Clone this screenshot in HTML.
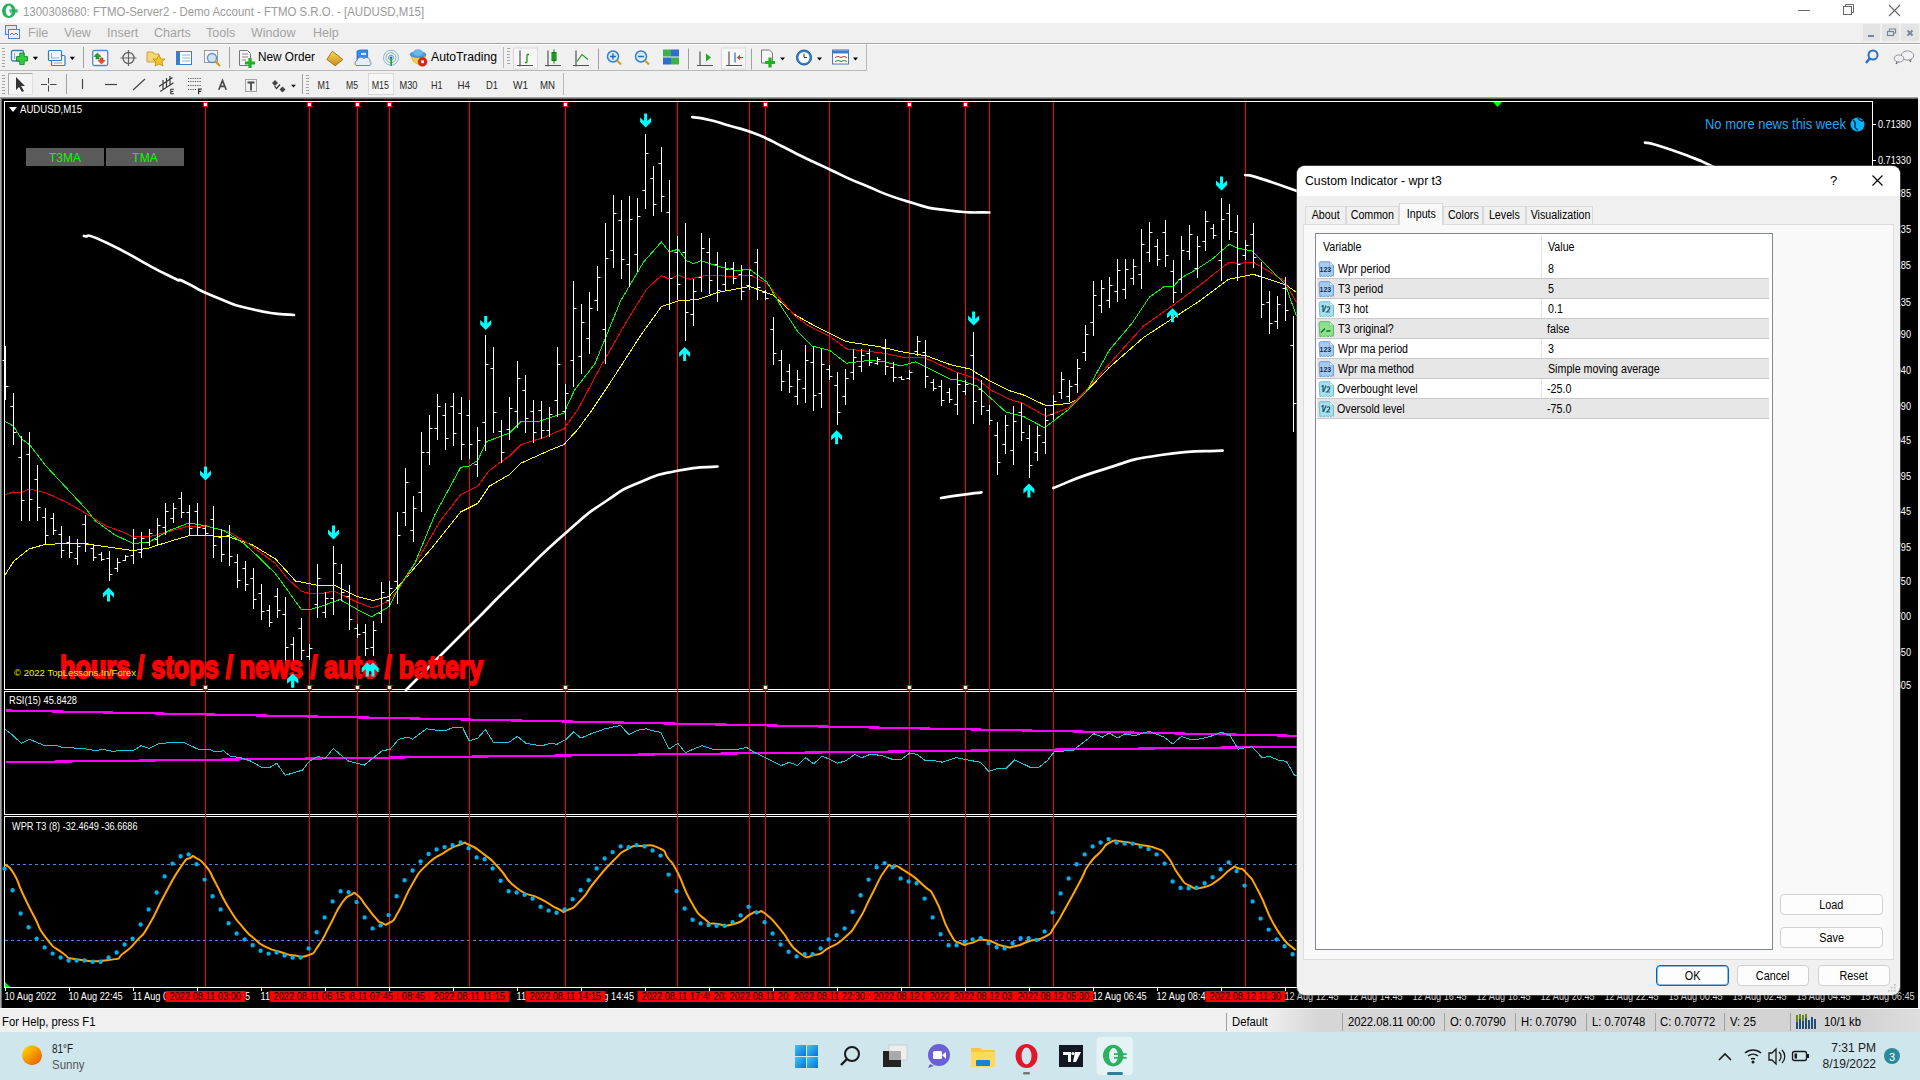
<!DOCTYPE html>
<html><head><meta charset="utf-8">
<style>
*{margin:0;padding:0;box-sizing:border-box}
html,body{width:1920px;height:1080px;overflow:hidden;background:#f0f0f0;font-family:"Liberation Sans",sans-serif;position:relative}
.a{position:absolute}
.t{position:absolute;white-space:nowrap;line-height:1}
.menuitem{top:27px;font-size:12.5px;color:#a3a3a3}
.tf{position:absolute;top:79px;font-size:11.5px;color:#222;white-space:nowrap;line-height:1}
.sb{position:absolute;top:1016px;font-size:12px;color:#000;white-space:nowrap;line-height:1;transform:scaleX(.94);transform-origin:0 0}
.sep{position:absolute;top:1013px;width:1px;height:18px;background:#a0a0a0}
.row{position:absolute;left:1317px;width:452px;height:20px}
.row.g{background:#e6e6e6}
.rl{position:absolute;left:0;top:19px;width:452px;height:1px;background:#c8c8c8}
.cell{position:absolute;font-size:12px;color:#000;top:4px;white-space:nowrap;line-height:1;transform:scaleX(.89);transform-origin:0 0}
.btn{position:absolute;background:#fdfdfd;border:1px solid #d0d0d0;border-radius:4px;font-size:12px;color:#000;text-align:center;line-height:20px}
.tab{position:absolute;top:206px;height:18px;border:1px solid #d9d9d9;border-bottom:none;background:#f0f0f0;font-size:12px;color:#000;text-align:center;line-height:17px;white-space:nowrap}.tab span{display:inline-block;transform:scaleX(.89)}
.ico{position:absolute;left:1px;top:2px;width:16px;height:16px;border-radius:2px}
</style></head><body>
<!-- title bar -->
<div class="a" style="left:0;top:0;width:1920px;height:23px;background:#fff"></div>
<svg class="a" style="left:0;top:0" width="22" height="22"><path fill-rule="evenodd" fill="#27b15e" d="M8.8,3.6a6.8,7.2 0 1,0 0.01,0zM8.9,5.6a3.1,5.2 0 1,1 -0.01,0z"/><rect x="9.5" y="9.2" width="8.3" height="3.4" fill="#27b15e" opacity=".85"/></svg>
<div class="t" style="left:23px;top:5px;font-size:13px;color:#9a9a9a;transform:scaleX(.88);transform-origin:0 0">1300308680: FTMO-Server2 - Demo Account - FTMO S.R.O. - [AUDUSD,M15]</div>
<svg class="a" style="left:1790px;top:0" width="130" height="22"><line x1="8" y1="10.5" x2="20" y2="10.5" stroke="#666" stroke-width="1"/><rect x="53.5" y="6.5" width="8" height="8" fill="none" stroke="#666"/><path d="M55.5,6.5v-2h8v8h-2" fill="none" stroke="#666"/><path d="M99,5l11,11M110,5l-11,11" stroke="#666" stroke-width="1.1"/></svg>
<!-- menu -->
<div class="a" style="left:0;top:23px;width:1920px;height:20px;background:#f0f0f0"></div>
<svg class="a" style="left:4px;top:24px" width="16" height="16"><rect x="1.5" y="1.5" width="11" height="9" fill="#dde9f7" stroke="#4b84c9"/><rect x="4.5" y="5.5" width="11" height="9" fill="#eaf2fb" stroke="#4b84c9"/><path d="M6,11l2,-2l2,2l2,-2l2,2" stroke="#4b84c9" fill="none"/></svg>
<div class="t menuitem" style="left:28px">File</div>
<div class="t menuitem" style="left:64px">View</div>
<div class="t menuitem" style="left:107px">Insert</div>
<div class="t menuitem" style="left:154px">Charts</div>
<div class="t menuitem" style="left:206px">Tools</div>
<div class="t menuitem" style="left:251px">Window</div>
<div class="t menuitem" style="left:313px">Help</div>
<svg class="a" style="left:1862px;top:23px" width="58" height="20"><rect x="1" y="1" width="17" height="17" fill="#e4e4e4"/><rect x="20" y="1" width="17" height="17" fill="#e4e4e4"/><rect x="39" y="1" width="18" height="17" fill="#e4e4e4"/><rect x="6" y="12" width="6" height="2" fill="#74869a"/><rect x="25.5" y="8.5" width="6" height="4" fill="none" stroke="#74869a" stroke-width="1.2"/><path d="M27.5,8.5v-2.5h6v4h-2" fill="none" stroke="#74869a" stroke-width="1.2"/><path d="M45.5,7.5l5,5M50.5,7.5l-5,5" stroke="#74869a" stroke-width="1.8"/></svg>
<div class="a" style="left:0;top:43px;width:1920px;height:1px;background:#a8a8a8"></div>
<div class="a" style="left:0;top:44px;width:1920px;height:1px;background:#fff"></div>
<!-- toolbar 1 -->
<div class="a" style="left:0;top:70px;width:867px;height:1px;background:#b9b9b9"></div>
<div class="a" style="left:866px;top:44px;width:1px;height:27px;background:#b9b9b9"></div>
<svg class="a" style="left:0;top:44px" width="880" height="27">
 <g fill="#a6a6a6"><rect x="2" y="4" width="3" height="1"/><rect x="2" y="7" width="3" height="1"/><rect x="2" y="10" width="3" height="1"/><rect x="2" y="13" width="3" height="1"/><rect x="2" y="16" width="3" height="1"/><rect x="2" y="19" width="3" height="1"/><rect x="2" y="22" width="3" height="1"/></g>
 <rect x="11.5" y="6.5" width="12" height="10.5" rx="1.5" fill="#f4f8fd" stroke="#3b78c4" stroke-width="1.3"/><path d="M14.5,9v6" stroke="#8aa0b8"/>
 <path d="M19.8,9h4.4v3.6h3.3v4.4h-3.3v3.6h-4.4v-3.6h-3.3v-4.4h3.3z" fill="#2ed040" stroke="#0f7a1c" stroke-width=".8"/>
 <path d="M32.8,12.8h5.3l-2.65,3.2z" fill="#000"/>
 <rect x="51.5" y="11.5" width="13.5" height="10" rx="1" fill="#f4f8fd" stroke="#3b78c4" stroke-width="1.2"/><rect x="48.5" y="6.5" width="13" height="10" rx="1" fill="#f4f8fd" stroke="#3b78c4" stroke-width="1.2"/><path d="M51,14h8M54,19h8M51.5,9v5" stroke="#8aa0b8" stroke-width=".9"/>
 <path d="M69.7,12.8h5.3l-2.65,3.2z" fill="#000"/>
 <rect x="83" y="3" width="1" height="21" fill="#a0a0a0"/>
 <rect x="92.7" y="6.5" width="15" height="15" rx="1.5" fill="#fff" stroke="#4a8ad4" stroke-width="1.3"/><path d="M95,11h11M95,14h11M95,17h11" stroke="#e6e6e6"/>
 <path d="M97.4,9L101,12.5H99V15H96V12.5H93.8z" fill="#1fa82a" stroke="#0d6a14" stroke-width=".5"/><path d="M101.5,20L105,16.5H103V14H100V16.5H98z" fill="#e8502a" stroke="#b02a10" stroke-width=".5"/>
 <rect x="229" y="3" width="1" height="21" fill="#a0a0a0"/>
 <g transform="translate(0,2)">
 <circle cx="128.5" cy="12" r="5.5" fill="none" stroke="#666" stroke-width="1.4"/><path d="M128.5,4v16M120.5,12h16" stroke="#666" stroke-width="1.2"/>
 <path d="M147,6h6l1,2h5v8h-12z" fill="#f5d77a" stroke="#c9a33a"/><path d="M159,9l2,4h4l-3,3l1,4l-4,-2l-4,2l1,-4l-3,-3h4z" fill="#f3c326" stroke="#c08a10" stroke-width=".8"/>
 <rect x="176.5" y="5.5" width="15" height="13" fill="#fff" stroke="#3d7cc9"/><rect x="177" y="6" width="3" height="12" fill="#3d7cc9"/><path d="M182,9h8M182,12h8M182,15h8" stroke="#8fb3e0"/>
 <rect x="204.5" y="4.5" width="13" height="12" fill="#f4f4f4" stroke="#999"/><circle cx="212" cy="12" r="4.5" fill="#cfe3f7" stroke="#5a8fc8" stroke-width="1.3"/><path d="M215,15l5,5" stroke="#c9a020" stroke-width="2.2"/>
 <path d="M239.5,4.5h8l3,3v12h-11z" fill="#f6f6f6" stroke="#777"/><path d="M242,8h6M242,11h6M242,14h4" stroke="#888"/><path d="M250,12v10M245,17h10" stroke="#1db31d" stroke-width="3.2"/>
 </g>
 <defs><linearGradient id="gold" x1="0" y1="0" x2="0" y2="1"><stop offset="0" stop-color="#f7dc5a"/><stop offset="1" stop-color="#c98a1a"/></linearGradient></defs>
 <path d="M332.3,7.2L342.9,15.5L335.2,21.8L326.9,15.5z" fill="url(#gold)" stroke="#a0661a" stroke-width=".9"/>
 <path d="M357,7l3,-1h7.6v10.6h-10.6z" fill="#2f8ff0" stroke="#1c64c0" stroke-width=".8"/><rect x="361" y="9" width="5" height="2" fill="#cfe6fb"/>
 <path d="M356,21.5a3,3 0 0,1 1,-5a4,4 0 0,1 7,-2a3.5,3.5 0 0,1 6,3a2.5,2.5 0 0,1 0,4z" fill="#e8eef6" stroke="#5a78a8" stroke-width=".9"/>
 <circle cx="391" cy="13.75" r="7.5" fill="none" stroke="#86b6e6" stroke-width="1"/><circle cx="391" cy="13.75" r="5" fill="none" stroke="#7fc08f" stroke-width="1"/><circle cx="391" cy="13.75" r="2.5" fill="none" stroke="#5a9ad8" stroke-width="1"/><circle cx="391" cy="13.75" r="1.3" fill="#2a5fc0"/><path d="M391.2,14v8" stroke="#22a030" stroke-width="1.6"/>
 <path d="M411,12L426,12L420,22L413,17z" fill="#f2d24a" stroke="#c9a020" stroke-width=".6"/><ellipse cx="418" cy="10.5" rx="8" ry="3" fill="#4aa0de" stroke="#2f78b8" stroke-width=".6"/><ellipse cx="418" cy="8.5" rx="4.5" ry="3.2" fill="#6cb8ea"/>
 <circle cx="422.6" cy="17.8" r="4.4" fill="#e0201a" stroke="#b01010" stroke-width=".5"/><rect x="421.2" y="16.4" width="2.8" height="2.8" fill="#fff"/>
 <rect x="503" y="3" width="1" height="21" fill="#b9b9b9"/>
 <g fill="#a6a6a6"><rect x="507" y="4" width="3" height="1"/><rect x="507" y="7" width="3" height="1"/><rect x="507" y="10" width="3" height="1"/><rect x="507" y="13" width="3" height="1"/><rect x="507" y="16" width="3" height="1"/><rect x="507" y="19" width="3" height="1"/></g>
 <g transform="translate(0,1.5)">
 <rect x="513.5" y="2.5" width="24" height="21" fill="#f7f7f7" stroke="#d8d8d8"/>
 <path d="M520,5v16M517,20h16" stroke="#555" stroke-width="1.2"/><path d="M527,9v8M525,17h2M527,9h2" stroke="#1a9a1a" stroke-width="1.3"/>
 <path d="M548,5v16M545,20h16" stroke="#555" stroke-width="1.2"/><rect x="552" y="7" width="4" height="8" fill="#2bbf2b" stroke="#117711"/><path d="M554,4v14" stroke="#117711"/>
 <path d="M576,5v16M573,20h16" stroke="#555" stroke-width="1.2"/><path d="M577,16l5,-7l6,5" stroke="#1a9a1a" fill="none" stroke-width="1.2"/>
 <rect x="598" y="3" width="1" height="21" fill="#a0a0a0"/>
 <circle cx="613" cy="11" r="5.5" fill="#d7ebfb" stroke="#3a7fc5" stroke-width="1.5"/><path d="M610,11h6M613,8v6" stroke="#2a6fb5" stroke-width="1.5"/><path d="M617,15l4,4" stroke="#c9a020" stroke-width="2.2"/>
 <circle cx="641" cy="11" r="5.5" fill="#d7ebfb" stroke="#3a7fc5" stroke-width="1.5"/><path d="M638,11h6" stroke="#2a6fb5" stroke-width="1.5"/><path d="M645,15l4,4" stroke="#c9a020" stroke-width="2.2"/>
 <rect x="663" y="4" width="8" height="7" fill="#3bb04b"/><rect x="671" y="4" width="8" height="7" fill="#2a6fd0"/><rect x="663" y="12" width="8" height="7" fill="#2a6fd0"/><rect x="671" y="12" width="8" height="7" fill="#3bb04b"/>
 <rect x="688" y="3" width="1" height="21" fill="#a0a0a0"/>
 <path d="M700,6v14M697,20h16" stroke="#555" stroke-width="1.2"/><path d="M706,8v8l5,-4z" fill="#22aa22"/>
 <rect x="721.5" y="2.5" width="24" height="21" fill="#f7f7f7" stroke="#d8d8d8"/>
 <path d="M729,6v14M726,20h16" stroke="#555" stroke-width="1.2"/><path d="M735,7v10" stroke="#2a6fb5" stroke-width="1.2"/><path d="M743,12h-5l2,-2M738,12l2,2" stroke="#d03a1a" stroke-width="1.2" fill="none"/>
 <rect x="751" y="3" width="1" height="21" fill="#a0a0a0"/>
 <path d="M761.5,4.5h8l3,3v10h-11z" fill="#f6f6f6" stroke="#777"/><path d="M770,12v10M765,17h10" stroke="#1db31d" stroke-width="3.2"/><path d="M780,12h5l-2.5,3z" fill="#000"/>
 <circle cx="804" cy="12" r="7.5" fill="#2f7fd0" stroke="#1a5aa8"/><circle cx="804" cy="12" r="5.5" fill="#fff"/><path d="M804,8v4h3" stroke="#333" fill="none"/><path d="M817,12h5l-2.5,3z" fill="#000"/>
 <rect x="832.5" y="4.5" width="16" height="14" fill="#fff" stroke="#3d7cc9"/><rect x="833" y="5" width="15" height="3" fill="#3d7cc9"/><path d="M835,12l3,-1l3,1l3,-1l3,1" stroke="#c03020" fill="none"/><path d="M835,16l3,-1l3,1l3,-1l3,1" stroke="#209020" fill="none"/><path d="M853,12h5l-2.5,3z" fill="#000"/>
 </g>
 <text x="258" y="17" font-size="13" font-family="Liberation Sans" fill="#000" textLength="57" lengthAdjust="spacingAndGlyphs">New Order</text>
 <text x="431" y="17" font-size="13" font-family="Liberation Sans" fill="#000" textLength="66" lengthAdjust="spacingAndGlyphs">AutoTrading</text>
</svg>
<svg class="a" style="left:1862px;top:46px" width="58" height="24"><circle cx="11" cy="9" r="4.5" fill="none" stroke="#2a6fd0" stroke-width="2"/><path d="M8,12l-4,5" stroke="#2a6fd0" stroke-width="2.5"/><ellipse cx="45.5" cy="9.5" rx="6.2" ry="4.6" fill="#f2f2f6" stroke="#8a8a8a" stroke-width=".9"/><path d="M47,13.5l1.5,2.5l0.5,-3" fill="#f2f2f6" stroke="#555" stroke-width=".8"/><ellipse cx="37" cy="12.5" rx="4.8" ry="3.6" fill="#f2f2f6" stroke="#8a8a8a" stroke-width=".9"/><path d="M35,15.5l-1,2.5l2.5,-2" fill="#f2f2f6" stroke="#555" stroke-width=".8"/></svg>
<!-- toolbar 2 -->
<div class="a" style="left:0;top:96px;width:1920px;height:1px;background:#f5f5f5"></div>
<svg class="a" style="left:0;top:71px" width="580" height="26">
 <g fill="#a6a6a6"><rect x="2" y="4" width="3" height="1"/><rect x="2" y="7" width="3" height="1"/><rect x="2" y="10" width="3" height="1"/><rect x="2" y="13" width="3" height="1"/><rect x="2" y="16" width="3" height="1"/><rect x="2" y="19" width="3" height="1"/><rect x="2" y="22" width="3" height="1"/></g>
 <rect x="8.5" y="2.5" width="24" height="21" fill="#f5f5f5" stroke="#e0e0e0"/><path d="M8.5,23.5v-21h24" stroke="#a8a8a8" fill="none"/>
 <path d="M16,6v13l3,-3l3,5l2,-1l-3,-5h4z" fill="#333"/>
 <path d="M48.5,7v5.5M48.5,14.5v6M41,13.5h6M50,13.5h6.5" stroke="#444" stroke-width="1"/>
 <rect x="66" y="3" width="1" height="20" fill="#a0a0a0"/>
 <path d="M82.5,8v10" stroke="#444" stroke-width="1.2"/>
 <path d="M105,13.5h12" stroke="#444" stroke-width="1.2"/>
 <path d="M133,19l12,-11" stroke="#444" stroke-width="1.2"/>
 <path d="M159,15.4l13.5,-9M160.2,20.4l13.3,-8.7M163,9v9M166.5,7v9M170,5v9" stroke="#3a3a3a" stroke-width="1.2" fill="none"/><path d="M170.3,18.2h3.6M170.3,20.5h3M170.3,22.8h3.6M170.8,18.2v4.6" stroke="#333" stroke-width="1.1"/>
 <path d="M188,7.5h13M188,10.5h13M188,14.5h13M188,18.5h9" stroke="#555" stroke-width="1.1" stroke-dasharray="1.2,1.1"/><path d="M198.6,23.2v-5h3.2M198.6,20.4h2.6" stroke="#333" stroke-width="1.2" fill="none"/>
 <path d="M218.8,18.8l3.7,-9.3l3.7,9.3M220.2,15.4h4.6" stroke="#4a4a4a" stroke-width="1.7" fill="none"/>
 <rect x="245.5" y="8.5" width="11" height="12" fill="none" stroke="#555" stroke-width="1" stroke-dasharray="1,1"/><path d="M247.5,11.5h7M251,11.5v8" stroke="#4a4a4a" stroke-width="1.8"/>
 <path d="M272,12l3,-3l3,3l-3,3z" fill="#444"/><path d="M274.5,15l2,2.5l3.5,-4" stroke="#333" stroke-width="1.2" fill="none"/><path d="M279.5,18.5l3,-3l3,3l-3,3z" fill="#444"/><path d="M291,13.8h5l-2.5,2.6z" fill="#000"/>
 <rect x="302" y="3" width="1" height="20" fill="#a0a0a0"/>
 <g fill="#a6a6a6"><rect x="306" y="4" width="3" height="1"/><rect x="306" y="7" width="3" height="1"/><rect x="306" y="10" width="3" height="1"/><rect x="306" y="13" width="3" height="1"/><rect x="306" y="16" width="3" height="1"/><rect x="306" y="19" width="3" height="1"/><rect x="306" y="22" width="3" height="1"/></g>
 <rect x="368.5" y="2.5" width="25" height="21" fill="#f7f7f7" stroke="#d8d8d8"/>
 <rect x="563" y="2" width="1" height="22" fill="#b9b9b9"/>
</svg>
<svg class="a" style="left:0;top:71px" width="580" height="26"><text x="317.5" y="18" font-size="11" fill="#2a2a2a" font-family="Liberation Sans" textLength="12.5" lengthAdjust="spacingAndGlyphs">M1</text><text x="346" y="18" font-size="11" fill="#2a2a2a" font-family="Liberation Sans" textLength="12.0" lengthAdjust="spacingAndGlyphs">M5</text><text x="371.7" y="18" font-size="11" fill="#2a2a2a" font-family="Liberation Sans" textLength="17.3" lengthAdjust="spacingAndGlyphs">M15</text><text x="399.5" y="18" font-size="11" fill="#2a2a2a" font-family="Liberation Sans" textLength="18.0" lengthAdjust="spacingAndGlyphs">M30</text><text x="431" y="18" font-size="11" fill="#2a2a2a" font-family="Liberation Sans" textLength="11.5" lengthAdjust="spacingAndGlyphs">H1</text><text x="457.5" y="18" font-size="11" fill="#2a2a2a" font-family="Liberation Sans" textLength="12.5" lengthAdjust="spacingAndGlyphs">H4</text><text x="486" y="18" font-size="11" fill="#2a2a2a" font-family="Liberation Sans" textLength="12.0" lengthAdjust="spacingAndGlyphs">D1</text><text x="513" y="18" font-size="11" fill="#2a2a2a" font-family="Liberation Sans" textLength="15.0" lengthAdjust="spacingAndGlyphs">W1</text><text x="540" y="18" font-size="11" fill="#2a2a2a" font-family="Liberation Sans" textLength="15.0" lengthAdjust="spacingAndGlyphs">MN</text></svg>
<svg class="a" style="left:0;top:0" width="1920" height="1080"><rect x="0" y="97" width="1920" height="911" fill="#000"/><rect x="0" y="97" width="1" height="911" fill="#a9a9a9"/><rect x="1" y="97" width="1" height="911" fill="#6a6a6a"/><rect x="1918" y="97" width="2" height="911" fill="#f3f3f3"/><rect x="0" y="97" width="1918" height="1" fill="#a0a0a0"/><rect x="1" y="98" width="1917" height="1" fill="#6a6a6a"/><rect x="0" y="1008" width="1920" height="1" fill="#fff"/><rect x="4.5" y="101.5" width="1868" height="588" fill="none" stroke="#fff" stroke-width="1"/><rect x="4.5" y="691.5" width="1868" height="123" fill="none" stroke="#fff" stroke-width="1"/><rect x="4.5" y="816.5" width="1868" height="171" fill="none" stroke="#fff" stroke-width="1"/><line x1="5.5" y1="987" x2="5.5" y2="991" stroke="#fff" stroke-width="1"/><line x1="69.5" y1="987" x2="69.5" y2="991" stroke="#fff" stroke-width="1"/><line x1="133.5" y1="987" x2="133.5" y2="991" stroke="#fff" stroke-width="1"/><line x1="197.5" y1="987" x2="197.5" y2="991" stroke="#fff" stroke-width="1"/><line x1="261.5" y1="987" x2="261.5" y2="991" stroke="#fff" stroke-width="1"/><line x1="325.5" y1="987" x2="325.5" y2="991" stroke="#fff" stroke-width="1"/><line x1="389.5" y1="987" x2="389.5" y2="991" stroke="#fff" stroke-width="1"/><line x1="453.5" y1="987" x2="453.5" y2="991" stroke="#fff" stroke-width="1"/><line x1="517.5" y1="987" x2="517.5" y2="991" stroke="#fff" stroke-width="1"/><line x1="581.5" y1="987" x2="581.5" y2="991" stroke="#fff" stroke-width="1"/><line x1="645.5" y1="987" x2="645.5" y2="991" stroke="#fff" stroke-width="1"/><line x1="709.5" y1="987" x2="709.5" y2="991" stroke="#fff" stroke-width="1"/><line x1="773.5" y1="987" x2="773.5" y2="991" stroke="#fff" stroke-width="1"/><line x1="837.5" y1="987" x2="837.5" y2="991" stroke="#fff" stroke-width="1"/><line x1="901.5" y1="987" x2="901.5" y2="991" stroke="#fff" stroke-width="1"/><line x1="965.5" y1="987" x2="965.5" y2="991" stroke="#fff" stroke-width="1"/><line x1="1029.5" y1="987" x2="1029.5" y2="991" stroke="#fff" stroke-width="1"/><line x1="1093.5" y1="987" x2="1093.5" y2="991" stroke="#fff" stroke-width="1"/><line x1="1157.5" y1="987" x2="1157.5" y2="991" stroke="#fff" stroke-width="1"/><line x1="1221.5" y1="987" x2="1221.5" y2="991" stroke="#fff" stroke-width="1"/><line x1="1285.5" y1="987" x2="1285.5" y2="991" stroke="#fff" stroke-width="1"/><line x1="1349.5" y1="987" x2="1349.5" y2="991" stroke="#fff" stroke-width="1"/><line x1="1413.5" y1="987" x2="1413.5" y2="991" stroke="#fff" stroke-width="1"/><line x1="1477.5" y1="987" x2="1477.5" y2="991" stroke="#fff" stroke-width="1"/><line x1="1541.5" y1="987" x2="1541.5" y2="991" stroke="#fff" stroke-width="1"/><line x1="1605.5" y1="987" x2="1605.5" y2="991" stroke="#fff" stroke-width="1"/><line x1="1669.5" y1="987" x2="1669.5" y2="991" stroke="#fff" stroke-width="1"/><line x1="1733.5" y1="987" x2="1733.5" y2="991" stroke="#fff" stroke-width="1"/><line x1="1797.5" y1="987" x2="1797.5" y2="991" stroke="#fff" stroke-width="1"/><line x1="1861.5" y1="987" x2="1861.5" y2="991" stroke="#fff" stroke-width="1"/><line x1="1872" y1="124.5" x2="1876" y2="124.5" stroke="#fff"/><text x="1878" y="127.5" fill="#fff" font-size="10" font-family="Liberation Sans" textLength="33" lengthAdjust="spacingAndGlyphs">0.71380</text><line x1="1872" y1="160.5" x2="1876" y2="160.5" stroke="#fff"/><text x="1878" y="163.5" fill="#fff" font-size="10" font-family="Liberation Sans" textLength="33" lengthAdjust="spacingAndGlyphs">0.71330</text><line x1="1872" y1="193.5" x2="1876" y2="193.5" stroke="#fff"/><text x="1878" y="196.5" fill="#fff" font-size="10" font-family="Liberation Sans" textLength="33" lengthAdjust="spacingAndGlyphs">0.71285</text><line x1="1872" y1="229.5" x2="1876" y2="229.5" stroke="#fff"/><text x="1878" y="232.5" fill="#fff" font-size="10" font-family="Liberation Sans" textLength="33" lengthAdjust="spacingAndGlyphs">0.71235</text><line x1="1872" y1="265.5" x2="1876" y2="265.5" stroke="#fff"/><text x="1878" y="268.5" fill="#fff" font-size="10" font-family="Liberation Sans" textLength="33" lengthAdjust="spacingAndGlyphs">0.71185</text><line x1="1872" y1="302.5" x2="1876" y2="302.5" stroke="#fff"/><text x="1878" y="305.5" fill="#fff" font-size="10" font-family="Liberation Sans" textLength="33" lengthAdjust="spacingAndGlyphs">0.71135</text><line x1="1872" y1="334.5" x2="1876" y2="334.5" stroke="#fff"/><text x="1878" y="337.5" fill="#fff" font-size="10" font-family="Liberation Sans" textLength="33" lengthAdjust="spacingAndGlyphs">0.71090</text><line x1="1872" y1="370.5" x2="1876" y2="370.5" stroke="#fff"/><text x="1878" y="373.5" fill="#fff" font-size="10" font-family="Liberation Sans" textLength="33" lengthAdjust="spacingAndGlyphs">0.71040</text><line x1="1872" y1="406.5" x2="1876" y2="406.5" stroke="#fff"/><text x="1878" y="409.5" fill="#fff" font-size="10" font-family="Liberation Sans" textLength="33" lengthAdjust="spacingAndGlyphs">0.70990</text><line x1="1872" y1="440.5" x2="1876" y2="440.5" stroke="#fff"/><text x="1878" y="443.5" fill="#fff" font-size="10" font-family="Liberation Sans" textLength="33" lengthAdjust="spacingAndGlyphs">0.70945</text><line x1="1872" y1="476.5" x2="1876" y2="476.5" stroke="#fff"/><text x="1878" y="479.5" fill="#fff" font-size="10" font-family="Liberation Sans" textLength="33" lengthAdjust="spacingAndGlyphs">0.70895</text><line x1="1872" y1="511.5" x2="1876" y2="511.5" stroke="#fff"/><text x="1878" y="514.5" fill="#fff" font-size="10" font-family="Liberation Sans" textLength="33" lengthAdjust="spacingAndGlyphs">0.70845</text><line x1="1872" y1="547.5" x2="1876" y2="547.5" stroke="#fff"/><text x="1878" y="550.5" fill="#fff" font-size="10" font-family="Liberation Sans" textLength="33" lengthAdjust="spacingAndGlyphs">0.70795</text><line x1="1872" y1="581.5" x2="1876" y2="581.5" stroke="#fff"/><text x="1878" y="584.5" fill="#fff" font-size="10" font-family="Liberation Sans" textLength="33" lengthAdjust="spacingAndGlyphs">0.70750</text><line x1="1872" y1="616.5" x2="1876" y2="616.5" stroke="#fff"/><text x="1878" y="619.5" fill="#fff" font-size="10" font-family="Liberation Sans" textLength="33" lengthAdjust="spacingAndGlyphs">0.70700</text><line x1="1872" y1="652.5" x2="1876" y2="652.5" stroke="#fff"/><text x="1878" y="655.5" fill="#fff" font-size="10" font-family="Liberation Sans" textLength="33" lengthAdjust="spacingAndGlyphs">0.70650</text><line x1="1872" y1="685.5" x2="1876" y2="685.5" stroke="#fff"/><text x="1878" y="688.5" fill="#fff" font-size="10" font-family="Liberation Sans" textLength="33" lengthAdjust="spacingAndGlyphs">0.70605</text><line x1="5" y1="864.5" x2="1872" y2="864.5" stroke="#3d8fd0" stroke-width="1" stroke-dasharray="3,3"/><line x1="5" y1="940.5" x2="1872" y2="940.5" stroke="#3d8fd0" stroke-width="1" stroke-dasharray="3,3"/><line x1="205.5" y1="102" x2="205.5" y2="987" stroke="#ff0000" stroke-width="1"/><line x1="309.5" y1="102" x2="309.5" y2="987" stroke="#ff0000" stroke-width="1"/><line x1="357.5" y1="102" x2="357.5" y2="987" stroke="#ff0000" stroke-width="1"/><line x1="389.5" y1="102" x2="389.5" y2="987" stroke="#ff0000" stroke-width="1"/><line x1="469.5" y1="102" x2="469.5" y2="987" stroke="#ff0000" stroke-width="1"/><line x1="565.5" y1="102" x2="565.5" y2="987" stroke="#ff0000" stroke-width="1"/><line x1="677.5" y1="102" x2="677.5" y2="987" stroke="#ff0000" stroke-width="1"/><line x1="749.5" y1="102" x2="749.5" y2="987" stroke="#ff0000" stroke-width="1"/><line x1="765.5" y1="102" x2="765.5" y2="987" stroke="#ff0000" stroke-width="1"/><line x1="829.5" y1="102" x2="829.5" y2="987" stroke="#ff0000" stroke-width="1"/><line x1="909.5" y1="102" x2="909.5" y2="987" stroke="#ff0000" stroke-width="1"/><line x1="965.5" y1="102" x2="965.5" y2="987" stroke="#ff0000" stroke-width="1"/><line x1="989.5" y1="102" x2="989.5" y2="987" stroke="#ff0000" stroke-width="1"/><line x1="1053.5" y1="102" x2="1053.5" y2="987" stroke="#ff0000" stroke-width="1"/><line x1="1245.5" y1="102" x2="1245.5" y2="987" stroke="#ff0000" stroke-width="1"/><polyline points="5.0,575.0 14.0,561.0 29.0,549.0 43.0,545.0 60.0,543.6 86.0,544.0 115.0,548.0 133.4,550.7 149.0,548.0 172.0,540.7 189.0,535.8 206.6,535.5 229.5,537.0 252.5,545.0 275.5,559.0 295.5,581.0 310.0,583.7 320.0,586.0 334.3,585.2 357.3,596.6 373.0,600.4 388.9,596.6 403.2,580.9 431.9,547.9 460.6,512.0 477.8,503.4 489.3,486.2 509.4,474.7 520.9,463.2 549.5,450.3 563.9,444.6 578.3,428.8 592.0,410.0 614.9,375.5 640.7,335.3 661.4,306.6 678.0,300.9 698.0,299.4 718.2,292.3 749.7,286.5 772.7,295.0 795.6,315.2 815.0,326.0 846.6,341.7 884.0,347.4 901.0,351.7 927.0,356.0 950.0,364.6 970.0,369.0 988.7,380.4 1008.8,390.5 1023.1,394.8 1046.1,405.7 1069.0,403.4 1080.5,397.6 1109.2,367.5 1143.6,337.4 1172.3,318.7 1201.0,300.0 1228.3,279.3 1253.3,274.3 1286.1,285.0 1296.0,292.0" fill="none" stroke="#ffff00" stroke-width="1" shape-rendering="crispEdges"/><polyline points="5.0,494.8 13.5,492.0 21.5,492.5 29.5,489.0 46.0,493.0 66.0,502.0 86.0,513.4 106.0,526.0 123.0,532.0 133.4,537.0 152.0,536.0 172.0,530.6 189.0,526.0 206.6,526.0 229.5,532.0 252.5,546.4 275.5,563.6 287.0,578.0 301.0,591.0 310.0,593.8 320.0,593.8 334.3,591.0 357.3,602.4 373.0,608.0 388.9,601.0 400.3,586.6 420.4,555.0 440.5,520.6 460.6,494.8 477.8,486.2 489.3,470.4 509.4,456.0 520.9,444.6 543.8,437.4 563.9,428.8 577.6,410.0 600.5,366.9 623.5,326.7 646.4,289.4 661.4,275.6 669.4,279.3 678.0,275.0 689.5,279.3 706.7,275.0 732.5,276.5 749.7,275.0 767.0,283.6 795.6,316.6 810.0,326.7 829.4,336.0 846.6,348.9 884.0,353.2 904.0,357.5 924.0,357.5 955.6,371.8 977.2,379.0 991.6,390.5 1008.8,399.0 1023.1,403.4 1046.1,416.3 1069.0,407.7 1083.4,393.3 1115.0,357.5 1143.6,326.0 1172.3,305.8 1198.8,286.1 1221.5,268.0 1229.4,262.3 1237.4,263.4 1253.3,262.3 1266.9,270.2 1283.9,280.4 1296.3,302.0" fill="none" stroke="#ff0000" stroke-width="1" shape-rendering="crispEdges"/><polyline points="5.0,421.6 13.5,426.0 21.5,439.0 29.5,444.6 46.0,466.0 66.0,487.6 86.0,509.0 95.0,520.6 115.0,535.0 133.4,543.6 149.0,542.0 169.0,530.6 189.0,523.0 206.6,526.0 224.0,530.6 244.0,543.6 258.0,556.5 275.5,573.7 287.0,589.5 301.0,609.0 310.0,609.5 320.0,606.7 340.0,599.5 357.3,609.5 371.6,616.7 388.9,606.7 400.3,585.2 414.7,563.6 434.8,514.9 460.6,467.5 469.2,466.0 477.8,460.3 486.4,441.7 509.4,433.0 520.9,421.6 538.1,421.6 563.9,413.0 566.0,408.5 574.7,389.8 594.8,364.0 620.6,300.9 643.6,262.0 661.4,242.0 669.4,252.0 678.0,249.2 686.6,260.7 693.8,263.6 701.0,260.7 718.2,266.4 735.4,270.7 749.7,269.3 767.0,282.2 781.3,306.6 797.8,331.6 812.0,346.0 829.4,350.3 846.6,363.2 869.6,360.3 884.0,361.8 901.0,366.0 915.5,361.8 950.0,379.0 960.0,380.4 977.2,386.2 991.6,399.0 1005.9,412.0 1023.1,416.3 1044.6,427.8 1069.0,409.1 1086.3,391.9 1109.2,350.3 1132.2,323.0 1149.4,297.2 1164.8,286.1 1173.8,286.1 1180.7,278.2 1198.8,268.0 1212.4,258.9 1229.4,244.1 1237.4,248.0 1252.1,251.0 1264.6,263.4 1285.0,283.8 1296.3,315.6" fill="none" stroke="#00ff00" stroke-width="1" shape-rendering="crispEdges"/><path d="M5.5,346V400M2.5,360.5H5.5M5.5,386.5H8.5M13.5,393V445M10.5,406.5H13.5M13.5,432.5H16.5M21.5,436V521M18.5,457.5H21.5M21.5,500.5H24.5M29.5,432V521M26.5,454.5H29.5M29.5,499.5H32.5M37.5,465V521M34.5,479.5H37.5M37.5,507.5H40.5M45.5,508V544M42.5,517.5H45.5M45.5,535.5H48.5M53.5,513V535M50.5,518.5H53.5M53.5,530.5H56.5M61.5,526V558M58.5,534.5H61.5M61.5,550.5H64.5M69.5,536V558M66.5,542.5H69.5M69.5,552.5H72.5M77.5,539V565M74.5,558.5H77.5M77.5,546.5H80.5M85.5,515V552M82.5,524.5H85.5M85.5,543.5H88.5M93.5,544V561M90.5,548.5H93.5M93.5,557.5H96.5M101.5,552V561M98.5,554.5H101.5M101.5,559.5H104.5M109.5,551V581M106.5,558.5H109.5M109.5,574.5H112.5M117.5,558V572M114.5,568.5H117.5M117.5,562.5H120.5M125.5,555V561M122.5,560.5H125.5M125.5,556.5H128.5M133.5,529V564M130.5,555.5H133.5M133.5,538.5H136.5M141.5,532V558M138.5,552.5H141.5M141.5,538.5H144.5M149.5,529V546M146.5,542.5H149.5M149.5,533.5H152.5M157.5,518V546M154.5,539.5H157.5M157.5,525.5H160.5M165.5,503V535M162.5,527.5H165.5M165.5,511.5H168.5M173.5,503V523M170.5,518.5H173.5M173.5,508.5H176.5M181.5,492V518M178.5,498.5H181.5M181.5,512.5H184.5M189.5,505V535M186.5,512.5H189.5M189.5,528.5H192.5M197.5,503V535M194.5,511.5H197.5M197.5,527.5H200.5M205.5,526V535M202.5,528.5H205.5M205.5,533.5H208.5M213.5,506V558M210.5,519.5H213.5M213.5,545.5H216.5M221.5,529V562M218.5,537.5H221.5M221.5,554.5H224.5M229.5,525V566M226.5,535.5H229.5M229.5,556.5H232.5M237.5,554V588M234.5,562.5H237.5M237.5,580.5H240.5M245.5,561V591M242.5,568.5H245.5M245.5,584.5H248.5M253.5,568V609M250.5,578.5H253.5M253.5,599.5H256.5M261.5,584V620M258.5,593.5H261.5M261.5,611.5H264.5M269.5,605V627M266.5,610.5H269.5M269.5,622.5H272.5M277.5,588V618M274.5,596.5H277.5M277.5,610.5H280.5M285.5,597V664M282.5,614.5H285.5M285.5,647.5H288.5M293.5,637V667M290.5,644.5H293.5M293.5,660.5H296.5M301.5,618V660M298.5,628.5H301.5M301.5,650.5H304.5M309.5,644V660M306.5,656.5H309.5M309.5,648.5H312.5M317.5,564V618M314.5,604.5H317.5M317.5,578.5H320.5M325.5,592V618M322.5,612.5H325.5M325.5,598.5H328.5M333.5,546V615M330.5,598.5H333.5M333.5,563.5H336.5M341.5,564V601M338.5,573.5H341.5M341.5,592.5H344.5M349.5,585V630M346.5,596.5H349.5M349.5,619.5H352.5M357.5,624V638M354.5,628.5H357.5M357.5,634.5H360.5M365.5,624V656M362.5,632.5H365.5M365.5,648.5H368.5M373.5,621V656M370.5,647.5H373.5M373.5,630.5H376.5M381.5,582V623M378.5,613.5H381.5M381.5,592.5H384.5M389.5,581V607M386.5,600.5H389.5M389.5,588.5H392.5M397.5,512V604M394.5,581.5H397.5M397.5,535.5H400.5M405.5,468V526M402.5,512.5H405.5M405.5,482.5H408.5M413.5,496V542M410.5,530.5H413.5M413.5,508.5H416.5M421.5,432V512M418.5,492.5H421.5M421.5,452.5H424.5M429.5,415V465M426.5,452.5H429.5M429.5,428.5H432.5M437.5,394V440M434.5,428.5H437.5M437.5,406.5H440.5M445.5,403V450M442.5,415.5H445.5M445.5,438.5H448.5M453.5,393V446M450.5,406.5H453.5M453.5,433.5H456.5M461.5,397V460M458.5,413.5H461.5M461.5,444.5H464.5M469.5,400V459M466.5,415.5H469.5M469.5,444.5H472.5M477.5,427V477M474.5,464.5H477.5M477.5,440.5H480.5M485.5,335V451M482.5,422.5H485.5M485.5,364.5H488.5M493.5,347V433M490.5,368.5H493.5M493.5,412.5H496.5M501.5,420V463M498.5,431.5H501.5M501.5,452.5H504.5M509.5,397V440M506.5,429.5H509.5M509.5,408.5H512.5M517.5,361V428M514.5,411.5H517.5M517.5,378.5H520.5M525.5,375V433M522.5,390.5H525.5M525.5,418.5H528.5M533.5,400V443M530.5,411.5H533.5M533.5,432.5H536.5M541.5,401V439M538.5,410.5H541.5M541.5,430.5H544.5M549.5,407V437M546.5,430.5H549.5M549.5,414.5H552.5M557.5,347V417M554.5,400.5H557.5M557.5,364.5H560.5M565.5,384V420M562.5,411.5H565.5M565.5,393.5H568.5M573.5,281V387M570.5,360.5H573.5M573.5,308.5H576.5M581.5,304V374M578.5,356.5H581.5M581.5,322.5H584.5M589.5,292V354M586.5,338.5H589.5M589.5,308.5H592.5M597.5,266V311M594.5,300.5H597.5M597.5,277.5H600.5M605.5,223V364M602.5,329.5H605.5M605.5,258.5H608.5M613.5,195V268M610.5,250.5H613.5M613.5,213.5H616.5M621.5,200V279M618.5,220.5H621.5M621.5,259.5H624.5M629.5,196V287M626.5,264.5H629.5M629.5,219.5H632.5M637.5,198V272M634.5,254.5H637.5M637.5,216.5H640.5M645.5,134V209M642.5,190.5H645.5M645.5,153.5H648.5M653.5,166V216M650.5,178.5H653.5M653.5,204.5H656.5M661.5,147V212M658.5,163.5H661.5M661.5,196.5H664.5M669.5,180V310M666.5,212.5H669.5M669.5,278.5H672.5M677.5,236V300M674.5,252.5H677.5M677.5,284.5H680.5M685.5,223V341M682.5,252.5H685.5M685.5,312.5H688.5M693.5,279V326M690.5,314.5H693.5M693.5,291.5H696.5M701.5,233V292M698.5,277.5H701.5M701.5,248.5H704.5M709.5,238V294M706.5,252.5H709.5M709.5,280.5H712.5M717.5,252V302M714.5,264.5H717.5M717.5,290.5H720.5M725.5,262V291M722.5,284.5H725.5M725.5,269.5H728.5M733.5,262V284M730.5,268.5H733.5M733.5,278.5H736.5M741.5,265V300M738.5,274.5H741.5M741.5,291.5H744.5M749.5,270V290M746.5,285.5H749.5M749.5,275.5H752.5M757.5,249V300M754.5,262.5H757.5M757.5,287.5H760.5M765.5,290V300M762.5,292.5H765.5M765.5,298.5H768.5M773.5,317V365M770.5,329.5H773.5M773.5,353.5H776.5M781.5,350V391M778.5,360.5H781.5M781.5,381.5H784.5M789.5,364V393M786.5,371.5H789.5M789.5,386.5H792.5M797.5,370V405M794.5,396.5H797.5M797.5,379.5H800.5M805.5,345V403M802.5,388.5H805.5M805.5,360.5H808.5M813.5,346V411M810.5,362.5H813.5M813.5,395.5H816.5M821.5,349V408M818.5,393.5H821.5M821.5,364.5H824.5M829.5,365V380M826.5,369.5H829.5M829.5,376.5H832.5M837.5,372V425M834.5,385.5H837.5M837.5,412.5H840.5M845.5,369V405M842.5,396.5H845.5M845.5,378.5H848.5M853.5,349V380M850.5,372.5H853.5M853.5,357.5H856.5M861.5,349V372M858.5,366.5H861.5M861.5,355.5H864.5M869.5,349V366M866.5,353.5H869.5M869.5,362.5H872.5M877.5,357V365M874.5,363.5H877.5M877.5,359.5H880.5M885.5,339V375M882.5,348.5H885.5M885.5,366.5H888.5M893.5,362V382M890.5,367.5H893.5M893.5,377.5H896.5M901.5,376V380M898.5,377.5H901.5M901.5,379.5H904.5M909.5,370V380M906.5,378.5H909.5M909.5,372.5H912.5M917.5,336V356M914.5,351.5H917.5M917.5,341.5H920.5M925.5,340V388M922.5,352.5H925.5M925.5,376.5H928.5M933.5,379V391M930.5,382.5H933.5M933.5,388.5H936.5M941.5,380V406M938.5,386.5H941.5M941.5,400.5H944.5M949.5,388V403M946.5,392.5H949.5M949.5,399.5H952.5M957.5,373V415M954.5,404.5H957.5M957.5,384.5H960.5M965.5,380V395M962.5,391.5H965.5M965.5,384.5H968.5M973.5,332V424M970.5,355.5H973.5M973.5,401.5H976.5M981.5,380V415M978.5,389.5H981.5M981.5,406.5H984.5M989.5,405V425M986.5,410.5H989.5M989.5,420.5H992.5M997.5,422V475M994.5,435.5H997.5M997.5,462.5H1000.5M1005.5,415V454M1002.5,444.5H1005.5M1005.5,425.5H1008.5M1013.5,406V465M1010.5,450.5H1013.5M1013.5,421.5H1016.5M1021.5,403V441M1018.5,412.5H1021.5M1021.5,432.5H1024.5M1029.5,425V478M1026.5,438.5H1029.5M1029.5,465.5H1032.5M1037.5,426V461M1034.5,452.5H1037.5M1037.5,435.5H1040.5M1045.5,408V454M1042.5,442.5H1045.5M1045.5,420.5H1048.5M1053.5,395V420M1050.5,414.5H1053.5M1053.5,401.5H1056.5M1061.5,372V399M1058.5,392.5H1061.5M1061.5,379.5H1064.5M1069.5,380V402M1066.5,396.5H1069.5M1069.5,386.5H1072.5M1077.5,359V393M1074.5,384.5H1077.5M1077.5,368.5H1080.5M1085.5,325V361M1082.5,352.5H1085.5M1085.5,334.5H1088.5M1093.5,281V336M1090.5,322.5H1093.5M1093.5,295.5H1096.5M1101.5,280V313M1098.5,305.5H1101.5M1101.5,288.5H1104.5M1109.5,277V308M1106.5,300.5H1109.5M1109.5,285.5H1112.5M1117.5,259V302M1114.5,291.5H1117.5M1117.5,270.5H1120.5M1125.5,259V299M1122.5,289.5H1125.5M1125.5,269.5H1128.5M1133.5,259V285M1130.5,278.5H1133.5M1133.5,266.5H1136.5M1141.5,229V289M1138.5,274.5H1141.5M1141.5,244.5H1144.5M1149.5,222V262M1146.5,252.5H1149.5M1149.5,232.5H1152.5M1157.5,239V266M1154.5,246.5H1157.5M1157.5,259.5H1160.5M1165.5,220V267M1162.5,232.5H1165.5M1165.5,255.5H1168.5M1173.5,260V303M1170.5,271.5H1173.5M1173.5,292.5H1176.5M1181.5,236V293M1178.5,279.5H1181.5M1181.5,250.5H1184.5M1189.5,225V260M1186.5,251.5H1189.5M1189.5,234.5H1192.5M1197.5,236V278M1194.5,268.5H1197.5M1197.5,246.5H1200.5M1205.5,211V251M1202.5,241.5H1205.5M1205.5,221.5H1208.5M1213.5,224V239M1210.5,228.5H1213.5M1213.5,235.5H1216.5M1221.5,198V281M1218.5,260.5H1221.5M1221.5,219.5H1224.5M1229.5,204V240M1226.5,213.5H1229.5M1229.5,231.5H1232.5M1237.5,215V281M1234.5,232.5H1237.5M1237.5,264.5H1240.5M1245.5,240V260M1242.5,255.5H1245.5M1245.5,245.5H1248.5M1253.5,223V268M1250.5,234.5H1253.5M1253.5,257.5H1256.5M1261.5,262V318M1258.5,276.5H1261.5M1261.5,304.5H1264.5M1269.5,291V334M1266.5,302.5H1269.5M1269.5,323.5H1272.5M1277.5,296V329M1274.5,321.5H1277.5M1277.5,304.5H1280.5M1285.5,277V321M1282.5,288.5H1285.5M1285.5,310.5H1288.5M1293.5,316V432M1290.5,345.5H1293.5M1293.5,403.5H1296.5" stroke="#fff" stroke-width="1" fill="none"/><path d="M84.0,236.0C91.5,238.3 79.6,230.2 106.6,242.8C133.6,255.4 138.7,260.6 165.0,273.8C191.3,287.0 169.6,275.0 185.6,282.4C201.6,289.8 190.1,286.9 213.0,296.0C235.9,305.1 227.4,303.5 254.4,309.8C281.4,316.1 280.8,313.3 294.0,315.0" fill="none" stroke="#fff" stroke-width="2.7" stroke-linecap="round" stroke-linejoin="round"/><path d="M406.0,690.0C427.1,668.9 432.8,663.2 469.2,626.8C505.6,590.4 482.6,612.5 515.1,580.9C547.6,549.3 536.2,558.8 566.8,532.0C597.4,505.2 582.6,517.1 607.0,500.5C631.4,483.9 616.6,492.2 640.0,482.3C663.4,472.4 651.5,476.1 677.3,470.8C703.1,465.5 704.1,467.9 717.5,466.5" fill="none" stroke="#fff" stroke-width="2.7" stroke-linecap="round" stroke-linejoin="round"/><path d="M692.3,117.2C698.1,118.1 697.2,117.1 709.6,120.0C722.0,122.9 716.2,121.9 729.6,125.8C743.0,129.7 737.2,127.3 749.7,131.6C762.2,135.9 755.6,133.5 767.0,138.7C778.4,143.9 769.7,140.1 784.0,147.3C798.3,154.5 795.1,153.1 810.0,160.3C824.9,167.5 811.0,160.8 828.7,168.9C846.4,177.0 836.3,173.6 863.1,184.6C889.9,195.6 880.3,193.3 909.0,201.9C937.7,210.5 922.4,207.0 949.2,210.5C976.0,214.0 976.0,211.8 989.4,212.5" fill="none" stroke="#fff" stroke-width="2.7" stroke-linecap="round" stroke-linejoin="round"/><path d="M941.0,498.0C947.3,497.1 946.5,497.1 960.0,495.2C973.5,493.3 974.3,493.3 981.5,492.3" fill="none" stroke="#fff" stroke-width="2.7" stroke-linecap="round" stroke-linejoin="round"/><path d="M1053.3,488.0C1070.0,481.8 1067.6,480.4 1103.5,469.4C1139.4,458.4 1121.2,461.2 1160.9,455.0C1200.6,448.8 1202.0,452.1 1222.6,450.7" fill="none" stroke="#fff" stroke-width="2.7" stroke-linecap="round" stroke-linejoin="round"/><path d="M1245.3,175.0C1250.2,176.1 1243.0,173.1 1260.0,178.4C1277.0,183.7 1276.3,183.6 1296.3,190.8C1316.3,198.0 1312.1,196.9 1320.0,200.0" fill="none" stroke="#fff" stroke-width="2.7" stroke-linecap="round" stroke-linejoin="round"/><path d="M1645.0,142.6C1649.6,143.6 1644.0,141.1 1658.8,145.7C1673.6,150.3 1672.6,150.1 1689.5,156.5C1706.4,162.9 1696.0,158.8 1709.5,165.0C1723.0,171.2 1723.2,171.7 1730.0,175.0" fill="none" stroke="#fff" stroke-width="2.7" stroke-linecap="round" stroke-linejoin="round"/><rect x="203.5" y="102.5" width="4" height="4" fill="#fff" stroke="#ff0000" stroke-width="1"/><rect x="203.5" y="685.5" width="4" height="4" fill="#fff" stroke="#ff0000" stroke-width="1"/><rect x="307.5" y="102.5" width="4" height="4" fill="#fff" stroke="#ff0000" stroke-width="1"/><rect x="307.5" y="685.5" width="4" height="4" fill="#fff" stroke="#ff0000" stroke-width="1"/><rect x="355.5" y="102.5" width="4" height="4" fill="#fff" stroke="#ff0000" stroke-width="1"/><rect x="355.5" y="685.5" width="4" height="4" fill="#fff" stroke="#ff0000" stroke-width="1"/><rect x="387.5" y="102.5" width="4" height="4" fill="#fff" stroke="#ff0000" stroke-width="1"/><rect x="387.5" y="685.5" width="4" height="4" fill="#fff" stroke="#ff0000" stroke-width="1"/><rect x="563.5" y="102.5" width="4" height="4" fill="#fff" stroke="#ff0000" stroke-width="1"/><rect x="563.5" y="685.5" width="4" height="4" fill="#fff" stroke="#ff0000" stroke-width="1"/><rect x="763.5" y="102.5" width="4" height="4" fill="#fff" stroke="#ff0000" stroke-width="1"/><rect x="763.5" y="685.5" width="4" height="4" fill="#fff" stroke="#ff0000" stroke-width="1"/><rect x="907.5" y="102.5" width="4" height="4" fill="#fff" stroke="#ff0000" stroke-width="1"/><rect x="907.5" y="685.5" width="4" height="4" fill="#fff" stroke="#ff0000" stroke-width="1"/><rect x="963.5" y="102.5" width="4" height="4" fill="#fff" stroke="#ff0000" stroke-width="1"/><rect x="963.5" y="685.5" width="4" height="4" fill="#fff" stroke="#ff0000" stroke-width="1"/><polygon points="204.0,466.5 207.0,466.5 207.0,474.0 211.0,470.5 211.0,475.0 205.5,480.5 200.0,475.0 200.0,470.5 204.0,474.0" fill="#00ffff"/><polygon points="332.0,525.5 335.0,525.5 335.0,533.0 339.0,529.5 339.0,534.0 333.5,539.5 328.0,534.0 328.0,529.5 332.0,533.0" fill="#00ffff"/><polygon points="484.2,315.9 487.2,315.9 487.2,323.4 491.2,319.9 491.2,324.4 485.7,329.9 480.2,324.4 480.2,319.9 484.2,323.4" fill="#00ffff"/><polygon points="644.1,113.5 647.1,113.5 647.1,121.0 651.1,117.5 651.1,122.0 645.6,127.5 640.1,122.0 640.1,117.5 644.1,121.0" fill="#00ffff"/><polygon points="972.1,311.5 975.1,311.5 975.1,319.0 979.1,315.5 979.1,320.0 973.6,325.5 968.1,320.0 968.1,315.5 972.1,319.0" fill="#00ffff"/><polygon points="1220.0,176.4 1223.0,176.4 1223.0,183.9 1227.0,180.4 1227.0,184.9 1221.5,190.4 1216.0,184.9 1216.0,180.4 1220.0,183.9" fill="#00ffff"/><polygon points="107.0,601.5 110.0,601.5 110.0,594.0 114.0,597.5 114.0,593.0 108.5,587.5 103.0,593.0 103.0,597.5 107.0,594.0" fill="#00ffff"/><polygon points="291.2,687.5 294.2,687.5 294.2,680.0 298.2,683.5 298.2,679.0 292.7,673.5 287.2,679.0 287.2,683.5 291.2,680.0" fill="#00ffff"/><polygon points="365.8,676.5 368.8,676.5 368.8,669.0 372.8,672.5 372.8,668.0 367.3,662.5 361.8,668.0 361.8,672.5 365.8,669.0" fill="#00ffff"/><polygon points="371.5,676.5 374.5,676.5 374.5,669.0 378.5,672.5 378.5,668.0 373.0,662.5 367.5,668.0 367.5,672.5 371.5,669.0" fill="#00ffff"/><polygon points="683.1,361.1 686.1,361.1 686.1,353.6 690.1,357.1 690.1,352.6 684.6,347.1 679.1,352.6 679.1,357.1 683.1,353.6" fill="#00ffff"/><polygon points="835.1,444.3 838.1,444.3 838.1,436.8 842.1,440.3 842.1,435.8 836.6,430.3 831.1,435.8 831.1,440.3 835.1,436.8" fill="#00ffff"/><polygon points="1027.4,497.4 1030.4,497.4 1030.4,489.9 1034.4,493.4 1034.4,488.9 1028.9,483.4 1023.4,488.9 1023.4,493.4 1027.4,489.9" fill="#00ffff"/><polygon points="1171.0,322.2 1174.0,322.2 1174.0,314.7 1178.0,318.2 1178.0,313.7 1172.5,308.2 1167.0,313.7 1167.0,318.2 1171.0,314.7" fill="#00ffff"/><path d="M9,107h8l-4,5z" fill="#fff"/><text x="20" y="113" fill="#fff" font-size="10" font-family="Liberation Sans" textLength="62" lengthAdjust="spacingAndGlyphs">AUDUSD,M15</text><rect x="26" y="148" width="78" height="18" fill="#5a5a5a"/><rect x="106" y="148" width="78" height="18" fill="#5a5a5a"/><text x="65" y="161.5" fill="#00ff00" font-size="12" text-anchor="middle" font-family="Liberation Sans">T3MA</text><text x="145" y="161.5" fill="#00ff00" font-size="12" text-anchor="middle" font-family="Liberation Sans">TMA</text><text x="1705" y="129" fill="#1ea7f0" font-size="14" font-family="Liberation Sans" textLength="141" lengthAdjust="spacingAndGlyphs">No more news this week</text><circle cx="1857.5" cy="124.5" r="7" fill="#00b4ff"/><path d="M1853,120q3,2 2,5t3,5M1858,118q2,3 5,3" stroke="#003050" stroke-width="1.5" fill="none"/><path d="M1493,102h9l-4.5,5z" fill="#00ff00"/><text x="60" y="677.5" fill="#ff0000" stroke="#ff0000" stroke-width="1.9" font-size="32" font-weight="bold" font-family="Liberation Sans" textLength="423" lengthAdjust="spacingAndGlyphs">hours / stops / news / auto / battery</text><text x="14" y="676" fill="#f0f000" font-size="9.5" font-family="Liberation Sans" textLength="122" lengthAdjust="spacingAndGlyphs">© 2022 TopLessons.In/Forex</text><polygon points="291.2,687.5 294.2,687.5 294.2,680.0 298.2,683.5 298.2,679.0 292.7,673.5 287.2,679.0 287.2,683.5 291.2,680.0" fill="#00ffff"/><polygon points="365.8,676.5 368.8,676.5 368.8,669.0 372.8,672.5 372.8,668.0 367.3,662.5 361.8,668.0 361.8,672.5 365.8,669.0" fill="#00ffff"/><polygon points="371.5,676.5 374.5,676.5 374.5,669.0 378.5,672.5 378.5,668.0 373.0,662.5 367.5,668.0 367.5,672.5 371.5,669.0" fill="#00ffff"/><text x="9" y="704" fill="#fff" font-size="10" font-family="Liberation Sans" textLength="68" lengthAdjust="spacingAndGlyphs">RSI(15) 45.8428</text><path d="M6,710.5 L1297,735.8" stroke="#ff00ff" stroke-width="2.2" fill="none" shape-rendering="crispEdges"/><path d="M6,762.2 L1297,746.7" stroke="#ff00ff" stroke-width="2.2" fill="none" shape-rendering="crispEdges"/><polyline points="5.0,729.5 12.0,734.7 21.3,743.3 29.2,739.2 44.7,745.7 55.0,745.0 61.9,747.4 82.5,748.4 94.5,750.5 103.0,749.5 111.7,751.2 134.0,750.2 141.0,745.7 149.5,748.4 158.0,744.0 172.0,742.3 184.0,742.6 197.7,749.0 209.7,749.5 214.8,751.9 223.4,750.8 230.3,756.0 240.6,757.7 251.0,761.2 261.3,767.3 269.9,767.3 276.7,763.2 285.3,775.3 302.5,770.1 309.4,761.2 318.0,756.3 324.9,758.8 333.4,748.4 343.8,757.7 348.9,761.2 364.4,765.0 381.6,751.2 390.2,749.1 398.8,739.2 407.4,737.1 412.5,739.2 426.3,728.8 436.6,730.2 446.9,730.2 453.8,727.1 462.4,727.1 469.2,740.9 477.8,738.1 485.4,729.5 493.3,742.3 508.8,742.3 517.4,736.4 526.0,743.3 541.4,746.0 550.0,743.3 556.9,744.3 565.5,739.8 573.4,731.9 581.0,738.1 591.3,733.7 605.0,728.8 620.5,725.4 629.0,734.7 637.7,730.2 646.3,728.8 650.3,730.2 660.6,732.3 669.2,749.1 677.8,743.3 685.4,752.6 701.9,745.7 712.2,749.1 736.3,749.5 746.6,747.4 753.4,751.9 781.0,765.6 789.5,762.2 797.4,765.6 805.7,757.7 813.6,763.9 822.2,756.0 837.7,763.2 846.3,760.5 854.8,754.3 861.7,757.7 870.3,754.3 880.6,755.3 892.7,759.4 901.3,759.4 909.8,752.9 916.7,754.3 925.3,760.5 933.9,760.5 942.5,762.2 956.3,757.7 966.6,759.8 980.3,762.2 988.9,771.5 997.5,768.4 1006.1,768.4 1014.7,759.8 1030.2,767.3 1038.8,767.3 1047.4,760.5 1054.2,751.9 1073.1,750.2 1086.9,739.8 1093.8,733.7 1102.4,737.1 1109.2,733.0 1117.8,738.1 1124.7,734.0 1135.0,735.7 1148.8,731.3 1164.2,737.1 1172.8,744.0 1181.4,736.4 1190.0,739.2 1198.6,739.2 1210.6,736.4 1221.0,732.3 1229.6,734.7 1238.1,749.1 1251.9,746.7 1262.2,757.7 1269.1,756.3 1279.4,760.5 1286.3,761.2 1294.9,776.0 1300.0,774.0" fill="none" stroke="#20c8d8" stroke-width="1" shape-rendering="crispEdges"/><text x="12" y="829.5" fill="#fff" font-size="10" font-family="Liberation Sans" textLength="125.5" lengthAdjust="spacingAndGlyphs">WPR T3 (8) -32.4649 -36.6686</text><path d="M4.6,864.3C7.6,867.3 7.6,863.5 13.7,873.4C19.8,883.3 16.0,879.5 22.9,894.0C29.8,908.5 26.8,902.5 34.4,917.0C42.0,931.5 36.6,925.8 45.8,937.6C55.0,949.4 51.2,945.2 61.9,952.5C72.6,959.8 61.9,957.0 77.9,959.4C93.9,961.8 94.7,961.9 110.0,959.8C125.3,957.7 114.5,959.6 123.7,953.0C132.9,946.4 129.1,949.2 137.5,939.9C145.9,930.6 139.8,940.3 149.0,925.0C158.2,909.7 154.3,913.5 165.0,894.0C175.7,874.5 172.6,878.6 181.0,866.6C189.4,854.6 185.2,860.8 190.2,857.9C195.2,855.0 190.6,855.0 195.9,857.9C201.2,860.8 199.7,858.4 206.2,866.6C212.7,874.8 207.8,868.6 215.4,882.6C223.0,896.6 219.9,893.6 229.1,908.5C238.3,923.4 234.5,917.2 242.9,927.3C251.3,937.4 246.8,932.2 254.4,938.7C262.0,945.2 256.6,942.2 265.8,946.8C275.0,951.4 272.7,949.7 281.9,952.5C291.1,955.3 284.5,954.3 293.3,955.2C302.1,956.1 299.8,958.4 308.2,955.2C316.6,952.0 311.2,955.7 318.5,945.6C325.8,935.5 322.4,938.9 330.0,925.0C337.6,911.1 334.5,913.8 341.4,903.9C348.3,894.0 345.2,898.1 350.6,895.2C356.0,892.3 352.2,891.4 357.5,895.2C362.8,899.0 360.5,899.1 366.6,906.7C372.7,914.3 370.8,912.8 375.8,918.1C380.8,923.4 376.9,921.2 381.5,922.7C386.1,924.2 383.9,926.5 389.6,922.7C395.3,918.9 391.1,924.2 398.7,911.2C406.3,898.2 403.3,899.0 412.5,883.7C421.7,868.4 415.8,875.7 426.2,865.4C436.6,855.1 432.5,859.7 443.7,852.8C454.9,845.9 451.4,847.5 459.8,844.8C468.2,842.1 460.6,841.4 469.0,844.8C477.4,848.2 475.1,847.5 485.0,855.1C494.9,862.7 488.0,856.6 498.7,867.7C509.4,878.8 503.3,878.0 517.1,888.3C530.9,898.6 526.3,891.7 540.0,898.6C553.7,905.5 549.1,905.2 558.3,909.0C567.5,912.8 559.9,913.2 567.5,910.1C575.1,907.0 572.0,909.3 581.2,899.8C590.4,890.3 584.3,894.5 595.0,881.5C605.7,868.5 602.6,871.5 613.3,860.8C624.0,850.1 617.9,854.4 627.1,849.4C636.3,844.4 630.1,846.3 640.8,845.9C651.5,845.5 650.0,844.0 659.2,848.2C668.4,852.4 662.2,850.5 668.3,858.5C674.4,866.5 669.9,857.8 677.5,872.3C685.1,886.8 682.0,886.4 691.2,902.1C700.4,917.8 696.6,912.1 705.0,919.3C713.4,926.5 706.5,922.3 716.4,923.8C726.3,925.3 723.3,927.1 734.8,923.8C746.3,920.5 743.2,917.8 750.8,914.0C758.4,910.2 752.7,912.4 757.7,912.4C762.7,912.4 758.1,908.3 765.7,914.0C773.3,919.7 769.5,916.8 780.6,929.6C791.7,942.4 787.4,944.1 798.9,952.5C810.4,960.9 805.1,956.3 815.0,954.8C824.9,953.3 818.8,953.6 828.7,947.9C838.6,942.2 834.9,946.8 844.8,937.6C854.7,928.4 849.6,934.5 858.5,920.4C867.4,906.3 862.6,912.0 871.5,895.2C880.4,878.4 878.0,879.5 885.2,870.0C892.4,860.5 887.1,866.6 893.2,866.6C899.3,866.6 893.2,863.5 903.5,870.0C913.8,876.5 913.5,876.1 924.2,886.0C934.9,895.9 927.2,884.5 935.6,899.8C944.0,915.1 941.0,917.4 949.4,931.9C957.8,946.4 953.9,939.5 960.8,943.3C967.7,947.1 962.0,944.4 970.0,943.3C978.0,942.2 973.8,939.0 984.9,939.9C996.0,940.8 992.9,944.0 1003.2,946.1C1013.5,948.2 1007.0,947.8 1015.8,946.1C1024.6,944.4 1019.7,944.2 1029.6,941.0C1039.5,937.8 1037.2,941.4 1045.6,936.4C1054.0,931.4 1047.9,936.0 1054.8,926.1C1061.7,916.2 1057.8,921.6 1066.2,906.7C1074.6,891.8 1072.4,895.6 1080.0,881.5C1087.6,867.4 1082.2,874.2 1089.1,864.3C1096.0,854.4 1093.7,859.0 1100.6,851.7C1107.5,844.4 1102.9,845.9 1109.8,842.5C1116.7,839.1 1111.3,840.6 1121.2,841.4C1131.1,842.2 1128.1,842.5 1139.6,844.8C1151.1,847.1 1146.4,844.4 1155.6,848.2C1164.8,852.0 1159.5,847.4 1167.1,856.2C1174.7,865.0 1170.9,864.7 1178.5,874.6C1186.1,884.5 1181.6,881.8 1190.0,886.0C1198.4,890.2 1194.5,889.1 1203.7,887.2C1212.9,885.3 1208.3,886.4 1217.5,880.3C1226.7,874.2 1224.3,872.8 1231.2,868.8C1238.1,864.8 1232.7,866.4 1238.1,868.2C1243.5,870.0 1240.4,866.2 1247.3,874.1C1254.2,882.0 1248.8,873.3 1258.7,891.8C1268.6,910.3 1264.8,910.1 1277.0,929.6C1289.2,949.1 1289.3,943.3 1295.4,950.2" fill="none" stroke="#ffa500" stroke-width="2"/><path d="M4.6,868.8m-2.2,0a2.2,2.2 0 1,0 4.4,0a2.2,2.2 0 1,0 -4.4,0M12.6,890.2m-2.2,0a2.2,2.2 0 1,0 4.4,0a2.2,2.2 0 1,0 -4.4,0M20.6,913.5m-2.2,0a2.2,2.2 0 1,0 4.4,0a2.2,2.2 0 1,0 -4.4,0M28.6,927.3m-2.2,0a2.2,2.2 0 1,0 4.4,0a2.2,2.2 0 1,0 -4.4,0M36.6,938.7m-2.2,0a2.2,2.2 0 1,0 4.4,0a2.2,2.2 0 1,0 -4.4,0M44.6,947.4m-2.2,0a2.2,2.2 0 1,0 4.4,0a2.2,2.2 0 1,0 -4.4,0M52.6,953.6m-2.2,0a2.2,2.2 0 1,0 4.4,0a2.2,2.2 0 1,0 -4.4,0M60.6,957.5m-2.2,0a2.2,2.2 0 1,0 4.4,0a2.2,2.2 0 1,0 -4.4,0M68.6,960.5m-2.2,0a2.2,2.2 0 1,0 4.4,0a2.2,2.2 0 1,0 -4.4,0M76.6,960.5m-2.2,0a2.2,2.2 0 1,0 4.4,0a2.2,2.2 0 1,0 -4.4,0M84.6,960.5m-2.2,0a2.2,2.2 0 1,0 4.4,0a2.2,2.2 0 1,0 -4.4,0M92.6,961.7m-2.2,0a2.2,2.2 0 1,0 4.4,0a2.2,2.2 0 1,0 -4.4,0M100.6,961.7m-2.2,0a2.2,2.2 0 1,0 4.4,0a2.2,2.2 0 1,0 -4.4,0M108.6,957.5m-2.2,0a2.2,2.2 0 1,0 4.4,0a2.2,2.2 0 1,0 -4.4,0M116.6,952.5m-2.2,0a2.2,2.2 0 1,0 4.4,0a2.2,2.2 0 1,0 -4.4,0M124.6,944.5m-2.2,0a2.2,2.2 0 1,0 4.4,0a2.2,2.2 0 1,0 -4.4,0M132.6,938.7m-2.2,0a2.2,2.2 0 1,0 4.4,0a2.2,2.2 0 1,0 -4.4,0M140.6,924.5m-2.2,0a2.2,2.2 0 1,0 4.4,0a2.2,2.2 0 1,0 -4.4,0M148.6,909.4m-2.2,0a2.2,2.2 0 1,0 4.4,0a2.2,2.2 0 1,0 -4.4,0M156.6,892.5m-2.2,0a2.2,2.2 0 1,0 4.4,0a2.2,2.2 0 1,0 -4.4,0M164.6,876.4m-2.2,0a2.2,2.2 0 1,0 4.4,0a2.2,2.2 0 1,0 -4.4,0M172.6,863.6m-2.2,0a2.2,2.2 0 1,0 4.4,0a2.2,2.2 0 1,0 -4.4,0M180.6,856.2m-2.2,0a2.2,2.2 0 1,0 4.4,0a2.2,2.2 0 1,0 -4.4,0M188.6,854.4m-2.2,0a2.2,2.2 0 1,0 4.4,0a2.2,2.2 0 1,0 -4.4,0M196.6,864.3m-2.2,0a2.2,2.2 0 1,0 4.4,0a2.2,2.2 0 1,0 -4.4,0M204.6,879.6m-2.2,0a2.2,2.2 0 1,0 4.4,0a2.2,2.2 0 1,0 -4.4,0M212.6,896.3m-2.2,0a2.2,2.2 0 1,0 4.4,0a2.2,2.2 0 1,0 -4.4,0M220.6,909.4m-2.2,0a2.2,2.2 0 1,0 4.4,0a2.2,2.2 0 1,0 -4.4,0M228.6,923.2m-2.2,0a2.2,2.2 0 1,0 4.4,0a2.2,2.2 0 1,0 -4.4,0M236.6,933.5m-2.2,0a2.2,2.2 0 1,0 4.4,0a2.2,2.2 0 1,0 -4.4,0M244.6,939.4m-2.2,0a2.2,2.2 0 1,0 4.4,0a2.2,2.2 0 1,0 -4.4,0M252.6,945.2m-2.2,0a2.2,2.2 0 1,0 4.4,0a2.2,2.2 0 1,0 -4.4,0M260.6,950.7m-2.2,0a2.2,2.2 0 1,0 4.4,0a2.2,2.2 0 1,0 -4.4,0M268.6,953.6m-2.2,0a2.2,2.2 0 1,0 4.4,0a2.2,2.2 0 1,0 -4.4,0M276.6,952.5m-2.2,0a2.2,2.2 0 1,0 4.4,0a2.2,2.2 0 1,0 -4.4,0M284.6,955.5m-2.2,0a2.2,2.2 0 1,0 4.4,0a2.2,2.2 0 1,0 -4.4,0M292.6,957.5m-2.2,0a2.2,2.2 0 1,0 4.4,0a2.2,2.2 0 1,0 -4.4,0M300.6,957.5m-2.2,0a2.2,2.2 0 1,0 4.4,0a2.2,2.2 0 1,0 -4.4,0M308.6,948.4m-2.2,0a2.2,2.2 0 1,0 4.4,0a2.2,2.2 0 1,0 -4.4,0M316.6,932.3m-2.2,0a2.2,2.2 0 1,0 4.4,0a2.2,2.2 0 1,0 -4.4,0M324.6,917.4m-2.2,0a2.2,2.2 0 1,0 4.4,0a2.2,2.2 0 1,0 -4.4,0M332.6,901.4m-2.2,0a2.2,2.2 0 1,0 4.4,0a2.2,2.2 0 1,0 -4.4,0M340.6,891.3m-2.2,0a2.2,2.2 0 1,0 4.4,0a2.2,2.2 0 1,0 -4.4,0M348.6,892.2m-2.2,0a2.2,2.2 0 1,0 4.4,0a2.2,2.2 0 1,0 -4.4,0M356.6,902.1m-2.2,0a2.2,2.2 0 1,0 4.4,0a2.2,2.2 0 1,0 -4.4,0M364.6,917.4m-2.2,0a2.2,2.2 0 1,0 4.4,0a2.2,2.2 0 1,0 -4.4,0M372.6,928.4m-2.2,0a2.2,2.2 0 1,0 4.4,0a2.2,2.2 0 1,0 -4.4,0M380.6,925.4m-2.2,0a2.2,2.2 0 1,0 4.4,0a2.2,2.2 0 1,0 -4.4,0M388.6,915.1m-2.2,0a2.2,2.2 0 1,0 4.4,0a2.2,2.2 0 1,0 -4.4,0M396.6,896.3m-2.2,0a2.2,2.2 0 1,0 4.4,0a2.2,2.2 0 1,0 -4.4,0M404.6,880.3m-2.2,0a2.2,2.2 0 1,0 4.4,0a2.2,2.2 0 1,0 -4.4,0M412.6,870.5m-2.2,0a2.2,2.2 0 1,0 4.4,0a2.2,2.2 0 1,0 -4.4,0M420.6,861.5m-2.2,0a2.2,2.2 0 1,0 4.4,0a2.2,2.2 0 1,0 -4.4,0M428.6,854.0m-2.2,0a2.2,2.2 0 1,0 4.4,0a2.2,2.2 0 1,0 -4.4,0M436.6,849.4m-2.2,0a2.2,2.2 0 1,0 4.4,0a2.2,2.2 0 1,0 -4.4,0M444.6,847.1m-2.2,0a2.2,2.2 0 1,0 4.4,0a2.2,2.2 0 1,0 -4.4,0M452.6,845.2m-2.2,0a2.2,2.2 0 1,0 4.4,0a2.2,2.2 0 1,0 -4.4,0M460.6,842.5m-2.2,0a2.2,2.2 0 1,0 4.4,0a2.2,2.2 0 1,0 -4.4,0M468.6,848.2m-2.2,0a2.2,2.2 0 1,0 4.4,0a2.2,2.2 0 1,0 -4.4,0M476.6,857.4m-2.2,0a2.2,2.2 0 1,0 4.4,0a2.2,2.2 0 1,0 -4.4,0M484.6,859.2m-2.2,0a2.2,2.2 0 1,0 4.4,0a2.2,2.2 0 1,0 -4.4,0M492.6,868.4m-2.2,0a2.2,2.2 0 1,0 4.4,0a2.2,2.2 0 1,0 -4.4,0M500.6,880.8m-2.2,0a2.2,2.2 0 1,0 4.4,0a2.2,2.2 0 1,0 -4.4,0M508.6,891.3m-2.2,0a2.2,2.2 0 1,0 4.4,0a2.2,2.2 0 1,0 -4.4,0M516.6,892.5m-2.2,0a2.2,2.2 0 1,0 4.4,0a2.2,2.2 0 1,0 -4.4,0M524.6,894.7m-2.2,0a2.2,2.2 0 1,0 4.4,0a2.2,2.2 0 1,0 -4.4,0M532.6,898.6m-2.2,0a2.2,2.2 0 1,0 4.4,0a2.2,2.2 0 1,0 -4.4,0M540.6,906.7m-2.2,0a2.2,2.2 0 1,0 4.4,0a2.2,2.2 0 1,0 -4.4,0M548.6,910.6m-2.2,0a2.2,2.2 0 1,0 4.4,0a2.2,2.2 0 1,0 -4.4,0M556.6,912.8m-2.2,0a2.2,2.2 0 1,0 4.4,0a2.2,2.2 0 1,0 -4.4,0M564.6,909.4m-2.2,0a2.2,2.2 0 1,0 4.4,0a2.2,2.2 0 1,0 -4.4,0M572.6,899.3m-2.2,0a2.2,2.2 0 1,0 4.4,0a2.2,2.2 0 1,0 -4.4,0M580.6,890.2m-2.2,0a2.2,2.2 0 1,0 4.4,0a2.2,2.2 0 1,0 -4.4,0M588.6,880.3m-2.2,0a2.2,2.2 0 1,0 4.4,0a2.2,2.2 0 1,0 -4.4,0M596.6,868.4m-2.2,0a2.2,2.2 0 1,0 4.4,0a2.2,2.2 0 1,0 -4.4,0M604.6,858.5m-2.2,0a2.2,2.2 0 1,0 4.4,0a2.2,2.2 0 1,0 -4.4,0M612.6,852.1m-2.2,0a2.2,2.2 0 1,0 4.4,0a2.2,2.2 0 1,0 -4.4,0M620.6,846.4m-2.2,0a2.2,2.2 0 1,0 4.4,0a2.2,2.2 0 1,0 -4.4,0M628.6,847.1m-2.2,0a2.2,2.2 0 1,0 4.4,0a2.2,2.2 0 1,0 -4.4,0M636.6,845.2m-2.2,0a2.2,2.2 0 1,0 4.4,0a2.2,2.2 0 1,0 -4.4,0M644.6,846.4m-2.2,0a2.2,2.2 0 1,0 4.4,0a2.2,2.2 0 1,0 -4.4,0M652.6,850.5m-2.2,0a2.2,2.2 0 1,0 4.4,0a2.2,2.2 0 1,0 -4.4,0M660.6,855.6m-2.2,0a2.2,2.2 0 1,0 4.4,0a2.2,2.2 0 1,0 -4.4,0M668.6,874.6m-2.2,0a2.2,2.2 0 1,0 4.4,0a2.2,2.2 0 1,0 -4.4,0M676.6,891.3m-2.2,0a2.2,2.2 0 1,0 4.4,0a2.2,2.2 0 1,0 -4.4,0M684.6,908.5m-2.2,0a2.2,2.2 0 1,0 4.4,0a2.2,2.2 0 1,0 -4.4,0M692.6,919.7m-2.2,0a2.2,2.2 0 1,0 4.4,0a2.2,2.2 0 1,0 -4.4,0M700.6,923.4m-2.2,0a2.2,2.2 0 1,0 4.4,0a2.2,2.2 0 1,0 -4.4,0M708.6,925.0m-2.2,0a2.2,2.2 0 1,0 4.4,0a2.2,2.2 0 1,0 -4.4,0M716.6,925.7m-2.2,0a2.2,2.2 0 1,0 4.4,0a2.2,2.2 0 1,0 -4.4,0M724.6,925.7m-2.2,0a2.2,2.2 0 1,0 4.4,0a2.2,2.2 0 1,0 -4.4,0M732.6,922.2m-2.2,0a2.2,2.2 0 1,0 4.4,0a2.2,2.2 0 1,0 -4.4,0M740.6,915.4m-2.2,0a2.2,2.2 0 1,0 4.4,0a2.2,2.2 0 1,0 -4.4,0M748.6,906.7m-2.2,0a2.2,2.2 0 1,0 4.4,0a2.2,2.2 0 1,0 -4.4,0M756.6,912.4m-2.2,0a2.2,2.2 0 1,0 4.4,0a2.2,2.2 0 1,0 -4.4,0M764.6,922.2m-2.2,0a2.2,2.2 0 1,0 4.4,0a2.2,2.2 0 1,0 -4.4,0M772.6,933.5m-2.2,0a2.2,2.2 0 1,0 4.4,0a2.2,2.2 0 1,0 -4.4,0M780.6,944.5m-2.2,0a2.2,2.2 0 1,0 4.4,0a2.2,2.2 0 1,0 -4.4,0M788.6,951.8m-2.2,0a2.2,2.2 0 1,0 4.4,0a2.2,2.2 0 1,0 -4.4,0M796.6,956.4m-2.2,0a2.2,2.2 0 1,0 4.4,0a2.2,2.2 0 1,0 -4.4,0M804.6,954.3m-2.2,0a2.2,2.2 0 1,0 4.4,0a2.2,2.2 0 1,0 -4.4,0M812.6,954.3m-2.2,0a2.2,2.2 0 1,0 4.4,0a2.2,2.2 0 1,0 -4.4,0M820.6,948.4m-2.2,0a2.2,2.2 0 1,0 4.4,0a2.2,2.2 0 1,0 -4.4,0M828.6,939.4m-2.2,0a2.2,2.2 0 1,0 4.4,0a2.2,2.2 0 1,0 -4.4,0M836.6,935.3m-2.2,0a2.2,2.2 0 1,0 4.4,0a2.2,2.2 0 1,0 -4.4,0M844.6,928.4m-2.2,0a2.2,2.2 0 1,0 4.4,0a2.2,2.2 0 1,0 -4.4,0M852.6,911.7m-2.2,0a2.2,2.2 0 1,0 4.4,0a2.2,2.2 0 1,0 -4.4,0M860.6,895.2m-2.2,0a2.2,2.2 0 1,0 4.4,0a2.2,2.2 0 1,0 -4.4,0M868.6,879.6m-2.2,0a2.2,2.2 0 1,0 4.4,0a2.2,2.2 0 1,0 -4.4,0M876.6,867.2m-2.2,0a2.2,2.2 0 1,0 4.4,0a2.2,2.2 0 1,0 -4.4,0M884.6,863.1m-2.2,0a2.2,2.2 0 1,0 4.4,0a2.2,2.2 0 1,0 -4.4,0M892.6,867.2m-2.2,0a2.2,2.2 0 1,0 4.4,0a2.2,2.2 0 1,0 -4.4,0M900.6,878.5m-2.2,0a2.2,2.2 0 1,0 4.4,0a2.2,2.2 0 1,0 -4.4,0M908.6,881.5m-2.2,0a2.2,2.2 0 1,0 4.4,0a2.2,2.2 0 1,0 -4.4,0M916.6,883.3m-2.2,0a2.2,2.2 0 1,0 4.4,0a2.2,2.2 0 1,0 -4.4,0M924.6,898.6m-2.2,0a2.2,2.2 0 1,0 4.4,0a2.2,2.2 0 1,0 -4.4,0M932.6,917.4m-2.2,0a2.2,2.2 0 1,0 4.4,0a2.2,2.2 0 1,0 -4.4,0M940.6,934.2m-2.2,0a2.2,2.2 0 1,0 4.4,0a2.2,2.2 0 1,0 -4.4,0M948.6,945.2m-2.2,0a2.2,2.2 0 1,0 4.4,0a2.2,2.2 0 1,0 -4.4,0M956.6,945.2m-2.2,0a2.2,2.2 0 1,0 4.4,0a2.2,2.2 0 1,0 -4.4,0M964.6,941.7m-2.2,0a2.2,2.2 0 1,0 4.4,0a2.2,2.2 0 1,0 -4.4,0M972.6,939.4m-2.2,0a2.2,2.2 0 1,0 4.4,0a2.2,2.2 0 1,0 -4.4,0M980.6,938.3m-2.2,0a2.2,2.2 0 1,0 4.4,0a2.2,2.2 0 1,0 -4.4,0M988.6,943.3m-2.2,0a2.2,2.2 0 1,0 4.4,0a2.2,2.2 0 1,0 -4.4,0M996.6,947.2m-2.2,0a2.2,2.2 0 1,0 4.4,0a2.2,2.2 0 1,0 -4.4,0M1004.6,948.4m-2.2,0a2.2,2.2 0 1,0 4.4,0a2.2,2.2 0 1,0 -4.4,0M1012.6,943.3m-2.2,0a2.2,2.2 0 1,0 4.4,0a2.2,2.2 0 1,0 -4.4,0M1020.6,938.3m-2.2,0a2.2,2.2 0 1,0 4.4,0a2.2,2.2 0 1,0 -4.4,0M1028.6,938.3m-2.2,0a2.2,2.2 0 1,0 4.4,0a2.2,2.2 0 1,0 -4.4,0M1036.6,939.9m-2.2,0a2.2,2.2 0 1,0 4.4,0a2.2,2.2 0 1,0 -4.4,0M1044.6,931.4m-2.2,0a2.2,2.2 0 1,0 4.4,0a2.2,2.2 0 1,0 -4.4,0M1052.6,912.4m-2.2,0a2.2,2.2 0 1,0 4.4,0a2.2,2.2 0 1,0 -4.4,0M1060.6,893.4m-2.2,0a2.2,2.2 0 1,0 4.4,0a2.2,2.2 0 1,0 -4.4,0M1068.6,878.5m-2.2,0a2.2,2.2 0 1,0 4.4,0a2.2,2.2 0 1,0 -4.4,0M1076.6,864.3m-2.2,0a2.2,2.2 0 1,0 4.4,0a2.2,2.2 0 1,0 -4.4,0M1084.6,854.4m-2.2,0a2.2,2.2 0 1,0 4.4,0a2.2,2.2 0 1,0 -4.4,0M1092.6,846.4m-2.2,0a2.2,2.2 0 1,0 4.4,0a2.2,2.2 0 1,0 -4.4,0M1100.6,842.5m-2.2,0a2.2,2.2 0 1,0 4.4,0a2.2,2.2 0 1,0 -4.4,0M1108.6,839.1m-2.2,0a2.2,2.2 0 1,0 4.4,0a2.2,2.2 0 1,0 -4.4,0M1116.6,842.5m-2.2,0a2.2,2.2 0 1,0 4.4,0a2.2,2.2 0 1,0 -4.4,0M1124.6,843.6m-2.2,0a2.2,2.2 0 1,0 4.4,0a2.2,2.2 0 1,0 -4.4,0M1132.6,843.6m-2.2,0a2.2,2.2 0 1,0 4.4,0a2.2,2.2 0 1,0 -4.4,0M1140.6,846.6m-2.2,0a2.2,2.2 0 1,0 4.4,0a2.2,2.2 0 1,0 -4.4,0M1148.6,848.9m-2.2,0a2.2,2.2 0 1,0 4.4,0a2.2,2.2 0 1,0 -4.4,0M1156.6,854.4m-2.2,0a2.2,2.2 0 1,0 4.4,0a2.2,2.2 0 1,0 -4.4,0M1164.6,863.6m-2.2,0a2.2,2.2 0 1,0 4.4,0a2.2,2.2 0 1,0 -4.4,0M1172.6,881.5m-2.2,0a2.2,2.2 0 1,0 4.4,0a2.2,2.2 0 1,0 -4.4,0M1180.6,887.9m-2.2,0a2.2,2.2 0 1,0 4.4,0a2.2,2.2 0 1,0 -4.4,0M1188.6,888.3m-2.2,0a2.2,2.2 0 1,0 4.4,0a2.2,2.2 0 1,0 -4.4,0M1196.6,887.6m-2.2,0a2.2,2.2 0 1,0 4.4,0a2.2,2.2 0 1,0 -4.4,0M1204.6,883.3m-2.2,0a2.2,2.2 0 1,0 4.4,0a2.2,2.2 0 1,0 -4.4,0M1212.6,877.3m-2.2,0a2.2,2.2 0 1,0 4.4,0a2.2,2.2 0 1,0 -4.4,0M1220.6,869.3m-2.2,0a2.2,2.2 0 1,0 4.4,0a2.2,2.2 0 1,0 -4.4,0M1228.6,862.4m-2.2,0a2.2,2.2 0 1,0 4.4,0a2.2,2.2 0 1,0 -4.4,0M1236.6,871.1m-2.2,0a2.2,2.2 0 1,0 4.4,0a2.2,2.2 0 1,0 -4.4,0M1244.6,885.6m-2.2,0a2.2,2.2 0 1,0 4.4,0a2.2,2.2 0 1,0 -4.4,0M1252.6,901.4m-2.2,0a2.2,2.2 0 1,0 4.4,0a2.2,2.2 0 1,0 -4.4,0M1260.6,918.6m-2.2,0a2.2,2.2 0 1,0 4.4,0a2.2,2.2 0 1,0 -4.4,0M1268.6,929.6m-2.2,0a2.2,2.2 0 1,0 4.4,0a2.2,2.2 0 1,0 -4.4,0M1276.6,939.4m-2.2,0a2.2,2.2 0 1,0 4.4,0a2.2,2.2 0 1,0 -4.4,0M1284.6,946.3m-2.2,0a2.2,2.2 0 1,0 4.4,0a2.2,2.2 0 1,0 -4.4,0M1292.6,954.3m-2.2,0a2.2,2.2 0 1,0 4.4,0a2.2,2.2 0 1,0 -4.4,0" fill="#00b0f0"/><path d="M5,982v5h5z" fill="#00ff00"/><text x="4.5" y="1000" fill="#fff" font-size="10" font-family="Liberation Sans" textLength="51.7" lengthAdjust="spacingAndGlyphs">10 Aug 2022</text><text x="68.5" y="1000" fill="#fff" font-size="10" font-family="Liberation Sans" textLength="54.2" lengthAdjust="spacingAndGlyphs">10 Aug 22:45</text><text x="132.5" y="1000" fill="#fff" font-size="10" font-family="Liberation Sans" textLength="53.6" lengthAdjust="spacingAndGlyphs">11 Aug 00:45</text><text x="196.5" y="1000" fill="#fff" font-size="10" font-family="Liberation Sans" textLength="53.6" lengthAdjust="spacingAndGlyphs">11 Aug 02:45</text><text x="260.5" y="1000" fill="#fff" font-size="10" font-family="Liberation Sans" textLength="53.6" lengthAdjust="spacingAndGlyphs">11 Aug 04:45</text><text x="324.5" y="1000" fill="#fff" font-size="10" font-family="Liberation Sans" textLength="53.6" lengthAdjust="spacingAndGlyphs">11 Aug 06:45</text><text x="388.5" y="1000" fill="#fff" font-size="10" font-family="Liberation Sans" textLength="53.6" lengthAdjust="spacingAndGlyphs">11 Aug 08:45</text><text x="452.5" y="1000" fill="#fff" font-size="10" font-family="Liberation Sans" textLength="53.6" lengthAdjust="spacingAndGlyphs">11 Aug 10:45</text><text x="516.5" y="1000" fill="#fff" font-size="10" font-family="Liberation Sans" textLength="53.6" lengthAdjust="spacingAndGlyphs">11 Aug 12:45</text><text x="580.5" y="1000" fill="#fff" font-size="10" font-family="Liberation Sans" textLength="53.6" lengthAdjust="spacingAndGlyphs">11 Aug 14:45</text><text x="644.5" y="1000" fill="#fff" font-size="10" font-family="Liberation Sans" textLength="53.6" lengthAdjust="spacingAndGlyphs">11 Aug 16:45</text><text x="708.5" y="1000" fill="#fff" font-size="10" font-family="Liberation Sans" textLength="53.6" lengthAdjust="spacingAndGlyphs">11 Aug 18:45</text><text x="772.5" y="1000" fill="#fff" font-size="10" font-family="Liberation Sans" textLength="53.6" lengthAdjust="spacingAndGlyphs">11 Aug 20:45</text><text x="836.5" y="1000" fill="#fff" font-size="10" font-family="Liberation Sans" textLength="53.6" lengthAdjust="spacingAndGlyphs">11 Aug 22:45</text><text x="900.5" y="1000" fill="#fff" font-size="10" font-family="Liberation Sans" textLength="54.2" lengthAdjust="spacingAndGlyphs">12 Aug 00:45</text><text x="964.5" y="1000" fill="#fff" font-size="10" font-family="Liberation Sans" textLength="54.2" lengthAdjust="spacingAndGlyphs">12 Aug 02:45</text><text x="1028.5" y="1000" fill="#fff" font-size="10" font-family="Liberation Sans" textLength="54.2" lengthAdjust="spacingAndGlyphs">12 Aug 04:45</text><text x="1092.5" y="1000" fill="#fff" font-size="10" font-family="Liberation Sans" textLength="54.2" lengthAdjust="spacingAndGlyphs">12 Aug 06:45</text><text x="1156.5" y="1000" fill="#fff" font-size="10" font-family="Liberation Sans" textLength="54.2" lengthAdjust="spacingAndGlyphs">12 Aug 08:45</text><text x="1220.5" y="1000" fill="#fff" font-size="10" font-family="Liberation Sans" textLength="54.2" lengthAdjust="spacingAndGlyphs">12 Aug 10:45</text><text x="1284.5" y="1000" fill="#cfcfcf" font-size="10" font-family="Liberation Sans" textLength="54.2" lengthAdjust="spacingAndGlyphs">12 Aug 12:45</text><text x="1348.5" y="1000" fill="#cfcfcf" font-size="10" font-family="Liberation Sans" textLength="54.2" lengthAdjust="spacingAndGlyphs">12 Aug 14:45</text><text x="1412.5" y="1000" fill="#cfcfcf" font-size="10" font-family="Liberation Sans" textLength="54.2" lengthAdjust="spacingAndGlyphs">12 Aug 16:45</text><text x="1476.5" y="1000" fill="#cfcfcf" font-size="10" font-family="Liberation Sans" textLength="54.2" lengthAdjust="spacingAndGlyphs">12 Aug 18:45</text><text x="1540.5" y="1000" fill="#cfcfcf" font-size="10" font-family="Liberation Sans" textLength="54.2" lengthAdjust="spacingAndGlyphs">12 Aug 20:45</text><text x="1604.5" y="1000" fill="#cfcfcf" font-size="10" font-family="Liberation Sans" textLength="54.2" lengthAdjust="spacingAndGlyphs">12 Aug 22:45</text><text x="1668.5" y="1000" fill="#cfcfcf" font-size="10" font-family="Liberation Sans" textLength="54.2" lengthAdjust="spacingAndGlyphs">15 Aug 00:45</text><text x="1732.5" y="1000" fill="#cfcfcf" font-size="10" font-family="Liberation Sans" textLength="54.2" lengthAdjust="spacingAndGlyphs">15 Aug 02:45</text><text x="1796.5" y="1000" fill="#cfcfcf" font-size="10" font-family="Liberation Sans" textLength="54.2" lengthAdjust="spacingAndGlyphs">15 Aug 04:45</text><text x="1860.5" y="1000" fill="#cfcfcf" font-size="10" font-family="Liberation Sans" textLength="54.2" lengthAdjust="spacingAndGlyphs">15 Aug 06:45</text><rect x="165.5" y="991" width="80" height="11" fill="#ff0000"/><text x="169.5" y="1000" fill="#000" font-size="10" font-family="Liberation Sans" textLength="71.5" lengthAdjust="spacingAndGlyphs">2022.08.11 03:00</text><rect x="429.5" y="991" width="80" height="11" fill="#ff0000"/><text x="433.5" y="1000" fill="#000" font-size="10" font-family="Liberation Sans" textLength="71.5" lengthAdjust="spacingAndGlyphs">2022.08.11 11:15</text><rect x="525.5" y="991" width="80" height="11" fill="#ff0000"/><text x="529.5" y="1000" fill="#000" font-size="10" font-family="Liberation Sans" textLength="71.5" lengthAdjust="spacingAndGlyphs">2022.08.11 14:15</text><rect x="1205.5" y="991" width="80" height="11" fill="#ff0000"/><text x="1209.5" y="1000" fill="#000" font-size="10" font-family="Liberation Sans" textLength="71.5" lengthAdjust="spacingAndGlyphs">2022.08.12 11:30</text><rect x="349.5" y="991" width="80" height="11" fill="#ff0000"/><text x="353.5" y="1000" fill="#000" font-size="10" font-family="Liberation Sans" textLength="71.5" lengthAdjust="spacingAndGlyphs">2022.08.11 08:45</text><rect x="317.5" y="991" width="80" height="11" fill="#ff0000"/><text x="321.5" y="1000" fill="#000" font-size="10" font-family="Liberation Sans" textLength="71.5" lengthAdjust="spacingAndGlyphs">2022.08.11 07:45</text><rect x="269.5" y="991" width="80" height="11" fill="#ff0000"/><text x="273.5" y="1000" fill="#000" font-size="10" font-family="Liberation Sans" textLength="71.5" lengthAdjust="spacingAndGlyphs">2022.08.11 06:15</text><rect x="637.5" y="991" width="80" height="11" fill="#ff0000"/><text x="641.5" y="1000" fill="#000" font-size="10" font-family="Liberation Sans" textLength="71.5" lengthAdjust="spacingAndGlyphs">2022.08.11 17:45</text><rect x="709.5" y="991" width="80" height="11" fill="#ff0000"/><text x="713.5" y="1000" fill="#000" font-size="10" font-family="Liberation Sans" textLength="71.5" lengthAdjust="spacingAndGlyphs">2022.08.11 20:00</text><rect x="725.5" y="991" width="80" height="11" fill="#ff0000"/><text x="729.5" y="1000" fill="#000" font-size="10" font-family="Liberation Sans" textLength="71.5" lengthAdjust="spacingAndGlyphs">2022.08.11 20:30</text><rect x="789.5" y="991" width="80" height="11" fill="#ff0000"/><text x="793.5" y="1000" fill="#000" font-size="10" font-family="Liberation Sans" textLength="71.5" lengthAdjust="spacingAndGlyphs">2022.08.11 22:30</text><rect x="869.5" y="991" width="80" height="11" fill="#ff0000"/><text x="873.5" y="1000" fill="#000" font-size="10" font-family="Liberation Sans" textLength="71.5" lengthAdjust="spacingAndGlyphs">2022.08.12 01:00</text><rect x="925.5" y="991" width="80" height="11" fill="#ff0000"/><text x="929.5" y="1000" fill="#000" font-size="10" font-family="Liberation Sans" textLength="71.5" lengthAdjust="spacingAndGlyphs">2022.08.12 02:45</text><rect x="949.5" y="991" width="80" height="11" fill="#ff0000"/><text x="953.5" y="1000" fill="#000" font-size="10" font-family="Liberation Sans" textLength="71.5" lengthAdjust="spacingAndGlyphs">2022.08.12 03:30</text><rect x="1013.5" y="991" width="80" height="11" fill="#ff0000"/><text x="1017.5" y="1000" fill="#000" font-size="10" font-family="Liberation Sans" textLength="71.5" lengthAdjust="spacingAndGlyphs">2022.08.12 05:30</text></svg>
<!-- status -->
<div class="a" style="left:0;top:1009px;width:1920px;height:23px;background:linear-gradient(90deg,#f0f0f0 0,#f0f0f0 1265px,#d6d6d6 1320px,#d2d2d2 1860px,#dedede 1920px)"></div>
<div class="sb" style="left:2px">For Help, press F1</div>
<div class="sep" style="left:1226px"></div><div class="sb" style="left:1232px">Default</div>
<div class="sep" style="left:1342px"></div><div class="sb" style="left:1348px">2022.08.11 00:00</div>
<div class="sep" style="left:1444px"></div><div class="sb" style="left:1450px">O: 0.70790</div>
<div class="sep" style="left:1515px"></div><div class="sb" style="left:1521px">H: 0.70790</div>
<div class="sep" style="left:1586px"></div><div class="sb" style="left:1592px">L: 0.70748</div>
<div class="sep" style="left:1655px"></div><div class="sb" style="left:1660px">C: 0.70772</div>
<div class="sep" style="left:1724px"></div><div class="sb" style="left:1730px">V: 25</div>
<div class="sep" style="left:1790px"></div>
<svg class="a" style="left:1796px;top:1013px" width="24" height="16"><g fill="#1f4f7a"><rect x="0" y="9" width="2" height="7"/><rect x="3" y="6" width="2" height="10"/><rect x="6" y="8" width="2" height="8"/><rect x="9" y="5" width="2" height="11"/><rect x="12" y="7" width="2" height="9"/><rect x="15" y="4" width="2" height="12"/><rect x="18" y="6" width="2" height="10"/></g><g fill="#6a8a10"><rect x="0" y="2" width="2" height="7"/><rect x="3" y="1" width="2" height="5"/><rect x="6" y="2" width="2" height="6"/><rect x="9" y="1" width="2" height="4"/></g></svg>
<div class="sb" style="left:1824px">10/1 kb</div>
<!-- taskbar -->
<div class="a" style="left:0;top:1032px;width:1920px;height:48px;background:#cfe6ed"></div>
<svg class="a" style="left:0;top:1032px" width="1920" height="48">
 <defs><linearGradient id="sun" x1="0.15" y1="0.1" x2="0.85" y2="0.9"><stop offset="0" stop-color="#ffcf00"/><stop offset="1" stop-color="#eb6200"/></linearGradient>
 <linearGradient id="win" x1="0" y1="0" x2="1" y2="1"><stop offset="0" stop-color="#3fc7f5"/><stop offset="1" stop-color="#0a6fd6"/></linearGradient></defs>
 <circle cx="32" cy="23.3" r="10" fill="url(#sun)"/>
 <text x="52" y="21" font-size="12" fill="#1a1a1a" font-family="Liberation Sans" textLength="21" lengthAdjust="spacingAndGlyphs">81°F</text>
 <text x="52" y="37" font-size="12" fill="#555" font-family="Liberation Sans" textLength="32.5" lengthAdjust="spacingAndGlyphs">Sunny</text>
 <rect x="795" y="13" width="11" height="11" fill="url(#win)"/><rect x="807" y="13" width="11" height="11" fill="url(#win)"/><rect x="795" y="25" width="11" height="11" fill="url(#win)"/><rect x="807" y="25" width="11" height="11" fill="url(#win)"/>
 <circle cx="852" cy="22" r="7" fill="none" stroke="#1a1a1a" stroke-width="2"/><path d="M847,27l-6,6" stroke="#1a1a1a" stroke-width="2.4"/>
 <rect x="889" y="13" width="18" height="15" fill="#eee" stroke="#ccc"/><rect x="883" y="19" width="18" height="16" fill="#222"/><rect x="889" y="19" width="12" height="9" fill="#aaa"/>
 <circle cx="939" cy="23" r="11" fill="#6a5fd8"/><path d="M930,32l-2,4l6,-2z" fill="#6a5fd8"/><rect x="933" y="19" width="9" height="8" rx="1.5" fill="#fff"/><path d="M942,23l4,-3v7z" fill="#fff"/>
 <path d="M971,16h9l2,2h13v17h-24z" fill="#f6c64b"/><rect x="971" y="20" width="24" height="15" fill="#ffd95a"/><rect x="976" y="28" width="14" height="6" rx="1" fill="#1a7fd8"/>
 <ellipse cx="1026.5" cy="24" rx="11" ry="12" fill="#e0162b"/><ellipse cx="1026.5" cy="24" rx="5" ry="8.5" fill="#cfe6ed"/>
 <rect x="1023" y="40" width="7" height="2.5" rx="1.2" fill="#777"/>
 <rect x="1059" y="13" width="24" height="22" fill="#131722"/><path d="M1063,20h8v10h-3v-7h-5z M1075,20h6l-5,10h-3z" fill="#fff"/><circle cx="1073" cy="21.5" r="1.6" fill="#fff"/>
 <rect x="1096.5" y="5" width="36.5" height="38" rx="4" fill="#e5f2f6"/>
 <path fill-rule="evenodd" fill="#2bb15f" d="M1113.2,12.7a10.3,10.85 0 1,0 0.01,0zM1113.5,15.9a4.45,7.75 0 1,1 -0.01,0z"/><rect x="1114" y="21.2" width="12.7" height="1.8" fill="#2bb15f"/><rect x="1114" y="24.9" width="12.7" height="1.8" fill="#2bb15f"/>
 <rect x="1107" y="40" width="16" height="3" rx="1.5" fill="#2a7f96"/>
 <path d="M1719,28l6,-6l6,6" stroke="#1a1a1a" stroke-width="1.6" fill="none"/>
 <path d="M1745,21a12,12 0 0,1 16,0M1748,24a8,8 0 0,1 10,0M1751,27a4,4 0 0,1 4,0" stroke="#1a1a1a" stroke-width="1.5" fill="none"/><circle cx="1753" cy="30" r="1.5" fill="#1a1a1a"/>
 <path d="M1769,21h3l4,-4v15l-4,-4h-3z" fill="none" stroke="#1a1a1a" stroke-width="1.3"/><path d="M1779,20a6,6 0 0,1 0,9M1782,18a9,9 0 0,1 0,13" stroke="#1a1a1a" stroke-width="1.3" fill="none"/>
 <rect x="1792.5" y="19.5" width="14" height="9" rx="2" fill="none" stroke="#1a1a1a" stroke-width="1.3"/><rect x="1794.5" y="21.5" width="2.5" height="5" fill="#1a1a1a"/><rect x="1807" y="22" width="2" height="4" fill="#1a1a1a"/>
 <text x="1876" y="20" font-size="12" fill="#1a1a1a" text-anchor="end" font-family="Liberation Sans">7:31 PM</text>
 <text x="1876" y="36" font-size="12" fill="#1a1a1a" text-anchor="end" font-family="Liberation Sans">8/19/2022</text>
 <circle cx="1892" cy="24" r="8" fill="#2b8a9a"/><text x="1892" y="28.5" font-size="11" fill="#fff" text-anchor="middle" font-family="Liberation Sans">3</text>
</svg>
<!-- dialog -->
<div class="a" style="left:1297px;top:166px;width:603px;height:829px;background:#f0f0f0;border-radius:8px;overflow:hidden;box-shadow:0 0 0 1px rgba(120,120,120,.5)">
  <div class="a" style="left:0;top:0;width:603px;height:30px;background:#fff"></div>
</div>
<div class="t" style="left:1305px;top:175px;font-size:12.5px;color:#000;transform:scaleX(.98);transform-origin:0 0">Custom Indicator - wpr t3</div>
<svg class="a" style="left:1820px;top:170px" width="70" height="22"><text x="10" y="15" font-size="13" font-family="Liberation Sans" fill="#000">?</text><path d="M52.5,5.5l10,10M62.5,5.5l-10,10" stroke="#000" stroke-width="1.1"/></svg>
<!-- tabs -->
<div class="a" style="left:1303px;top:224px;width:591px;height:736px;background:#f9f9f9;border:1px solid #dcdcdc"></div>
<div class="tab" style="left:1305px;width:41px"><span>About</span></div>
<div class="tab" style="left:1346px;width:53px"><span>Common</span></div>
<div class="tab" style="left:1399px;top:203px;height:22px;width:44px;background:#f9f9f9;line-height:20px;z-index:2"><span>Inputs</span></div>
<div class="tab" style="left:1443px;width:40px"><span>Colors</span></div>
<div class="tab" style="left:1483px;width:43px"><span>Levels</span></div>
<div class="tab" style="left:1526px;width:67px"><span>Visualization</span></div>
<!-- list -->
<div class="a" style="left:1315px;top:233px;width:458px;height:717px;background:#fff;border:1px solid #828790"></div>
<div class="a" style="left:1541px;top:236px;width:1px;height:183px;background:#e5e5e5"></div>
<div class="t" style="left:1323px;top:241px;font-size:12px;color:#000;transform:scaleX(.89);transform-origin:0 0">Variable</div>
<div class="t" style="left:1548px;top:241px;font-size:12px;color:#000;transform:scaleX(.89);transform-origin:0 0">Value</div>
<div class="row" style="top:259px"><div class="rl"></div><svg class="ico" width="16" height="17"><path d="M1,2.5q0,-1.8 1.8,-1.8h8.7l4,4v11l-1.3,-1.2l-1.4,1.3l-1.3,-1.2l-1.4,1.3l-1.3,-1.2l-1.4,1.3l-1.3,-1.2l-1.4,1.3l-1.3,-1.2l-1.4,1.3z" fill="#a6cbf0" stroke="#5b8cc8" stroke-width=".8"/><path d="M11.5,0.7v4h4" fill="#d8e8f8" stroke="#7aa0d0" stroke-width=".6"/><text x="1.6" y="11" font-size="6.6" font-weight="bold" fill="#0f2f55" font-family="Liberation Sans" textLength="11.5" lengthAdjust="spacingAndGlyphs">123</text></svg><div class="cell" style="left:21px">Wpr period</div><div class="cell" style="left:231px">8</div></div>
<div class="row g" style="top:279px"><div class="rl"></div><svg class="ico" width="16" height="17"><path d="M1,2.5q0,-1.8 1.8,-1.8h8.7l4,4v11l-1.3,-1.2l-1.4,1.3l-1.3,-1.2l-1.4,1.3l-1.3,-1.2l-1.4,1.3l-1.3,-1.2l-1.4,1.3l-1.3,-1.2l-1.4,1.3z" fill="#a6cbf0" stroke="#5b8cc8" stroke-width=".8"/><path d="M11.5,0.7v4h4" fill="#d8e8f8" stroke="#7aa0d0" stroke-width=".6"/><text x="1.6" y="11" font-size="6.6" font-weight="bold" fill="#0f2f55" font-family="Liberation Sans" textLength="11.5" lengthAdjust="spacingAndGlyphs">123</text></svg><div class="cell" style="left:21px">T3 period</div><div class="cell" style="left:231px">5</div></div>
<div class="row" style="top:299px"><div class="rl"></div><svg class="ico" width="16" height="17"><path d="M1,2.5q0,-1.8 1.8,-1.8h8.7l4,4v11l-1.3,-1.2l-1.4,1.3l-1.3,-1.2l-1.4,1.3l-1.3,-1.2l-1.4,1.3l-1.3,-1.2l-1.4,1.3l-1.3,-1.2l-1.4,1.3z" fill="#a8e0ee" stroke="#5fb0c8" stroke-width=".8"/><path d="M11.5,0.7v4h4" fill="#d8f0f8" stroke="#7ac0d0" stroke-width=".6"/><path d="M3.5,5.5l1.5,-1v6.5M5.5,11l2.5,-6.5M8.8,6.5q1.5,-1.5 2.8,0q0.8,1.2 -2.8,4.5h3" stroke="#1f5a70" stroke-width="1.2" fill="none"/></svg><div class="cell" style="left:21px">T3 hot</div><div class="cell" style="left:231px">0.1</div></div>
<div class="row g" style="top:319px"><div class="rl"></div><svg class="ico" width="16" height="17"><path d="M1,2.5q0,-1.8 1.8,-1.8h8.7l4,4v11l-1.3,-1.2l-1.4,1.3l-1.3,-1.2l-1.4,1.3l-1.3,-1.2l-1.4,1.3l-1.3,-1.2l-1.4,1.3l-1.3,-1.2l-1.4,1.3z" fill="#8fe08f" stroke="#44aa55" stroke-width=".8"/><path d="M11.5,0.7v4h4" fill="#c8f0c8" stroke="#66bb66" stroke-width=".6"/><path d="M3,11.5l4,-4M8.5,9.5q1,1.2 2,0.5q1,-0.5 2,0" stroke="#137a23" stroke-width="1.6" fill="none"/></svg><div class="cell" style="left:21px">T3 original?</div><div class="cell" style="left:230px">false</div></div>
<div class="row" style="top:339px"><div class="rl"></div><svg class="ico" width="16" height="17"><path d="M1,2.5q0,-1.8 1.8,-1.8h8.7l4,4v11l-1.3,-1.2l-1.4,1.3l-1.3,-1.2l-1.4,1.3l-1.3,-1.2l-1.4,1.3l-1.3,-1.2l-1.4,1.3l-1.3,-1.2l-1.4,1.3z" fill="#a6cbf0" stroke="#5b8cc8" stroke-width=".8"/><path d="M11.5,0.7v4h4" fill="#d8e8f8" stroke="#7aa0d0" stroke-width=".6"/><text x="1.6" y="11" font-size="6.6" font-weight="bold" fill="#0f2f55" font-family="Liberation Sans" textLength="11.5" lengthAdjust="spacingAndGlyphs">123</text></svg><div class="cell" style="left:21px">Wpr ma period</div><div class="cell" style="left:231px">3</div></div>
<div class="row g" style="top:359px"><div class="rl"></div><svg class="ico" width="16" height="17"><path d="M1,2.5q0,-1.8 1.8,-1.8h8.7l4,4v11l-1.3,-1.2l-1.4,1.3l-1.3,-1.2l-1.4,1.3l-1.3,-1.2l-1.4,1.3l-1.3,-1.2l-1.4,1.3l-1.3,-1.2l-1.4,1.3z" fill="#a6cbf0" stroke="#5b8cc8" stroke-width=".8"/><path d="M11.5,0.7v4h4" fill="#d8e8f8" stroke="#7aa0d0" stroke-width=".6"/><text x="1.6" y="11" font-size="6.6" font-weight="bold" fill="#0f2f55" font-family="Liberation Sans" textLength="11.5" lengthAdjust="spacingAndGlyphs">123</text></svg><div class="cell" style="left:21px">Wpr ma method</div><div class="cell" style="left:231px">Simple moving average</div></div>
<div class="row" style="top:379px"><div class="rl"></div><svg class="ico" width="16" height="17"><path d="M1,2.5q0,-1.8 1.8,-1.8h8.7l4,4v11l-1.3,-1.2l-1.4,1.3l-1.3,-1.2l-1.4,1.3l-1.3,-1.2l-1.4,1.3l-1.3,-1.2l-1.4,1.3l-1.3,-1.2l-1.4,1.3z" fill="#a8e0ee" stroke="#5fb0c8" stroke-width=".8"/><path d="M11.5,0.7v4h4" fill="#d8f0f8" stroke="#7ac0d0" stroke-width=".6"/><path d="M3.5,5.5l1.5,-1v6.5M5.5,11l2.5,-6.5M8.8,6.5q1.5,-1.5 2.8,0q0.8,1.2 -2.8,4.5h3" stroke="#1f5a70" stroke-width="1.2" fill="none"/></svg><div class="cell" style="left:20px">Overbought level</div><div class="cell" style="left:230px">-25.0</div></div>
<div class="row g" style="top:399px"><div class="rl"></div><svg class="ico" width="16" height="17"><path d="M1,2.5q0,-1.8 1.8,-1.8h8.7l4,4v11l-1.3,-1.2l-1.4,1.3l-1.3,-1.2l-1.4,1.3l-1.3,-1.2l-1.4,1.3l-1.3,-1.2l-1.4,1.3l-1.3,-1.2l-1.4,1.3z" fill="#a8e0ee" stroke="#5fb0c8" stroke-width=".8"/><path d="M11.5,0.7v4h4" fill="#d8f0f8" stroke="#7ac0d0" stroke-width=".6"/><path d="M3.5,5.5l1.5,-1v6.5M5.5,11l2.5,-6.5M8.8,6.5q1.5,-1.5 2.8,0q0.8,1.2 -2.8,4.5h3" stroke="#1f5a70" stroke-width="1.2" fill="none"/></svg><div class="cell" style="left:20px">Oversold level</div><div class="cell" style="left:230px">-75.0</div></div>
<!-- buttons -->
<div class="btn" style="left:1780px;top:894px;width:103px;height:21px"><span style="display:inline-block;transform:scaleX(.9)">Load</span></div>
<div class="btn" style="left:1780px;top:927px;width:103px;height:21px"><span style="display:inline-block;transform:scaleX(.9)">Save</span></div>
<div class="btn" style="left:1656px;top:965px;width:73px;height:21px;border:1px solid #0067c0;box-shadow:inset 0 0 0 1px rgba(0,103,192,.45);line-height:20px"><span style="display:inline-block;transform:scaleX(.9)">OK</span></div>
<div class="btn" style="left:1737px;top:965px;width:72px;height:21px"><span style="display:inline-block;transform:scaleX(.9)">Cancel</span></div>
<div class="btn" style="left:1818px;top:965px;width:72px;height:21px"><span style="display:inline-block;transform:scaleX(.9)">Reset</span></div>
<svg class="a" style="left:1886px;top:982px" width="12" height="12"><g fill="#b8b8b8"><rect x="8" y="2" width="1.5" height="1.5"/><rect x="5" y="5" width="1.5" height="1.5"/><rect x="8" y="5" width="1.5" height="1.5"/><rect x="2" y="8" width="1.5" height="1.5"/><rect x="5" y="8" width="1.5" height="1.5"/><rect x="8" y="8" width="1.5" height="1.5"/></g></svg>
</body></html>
